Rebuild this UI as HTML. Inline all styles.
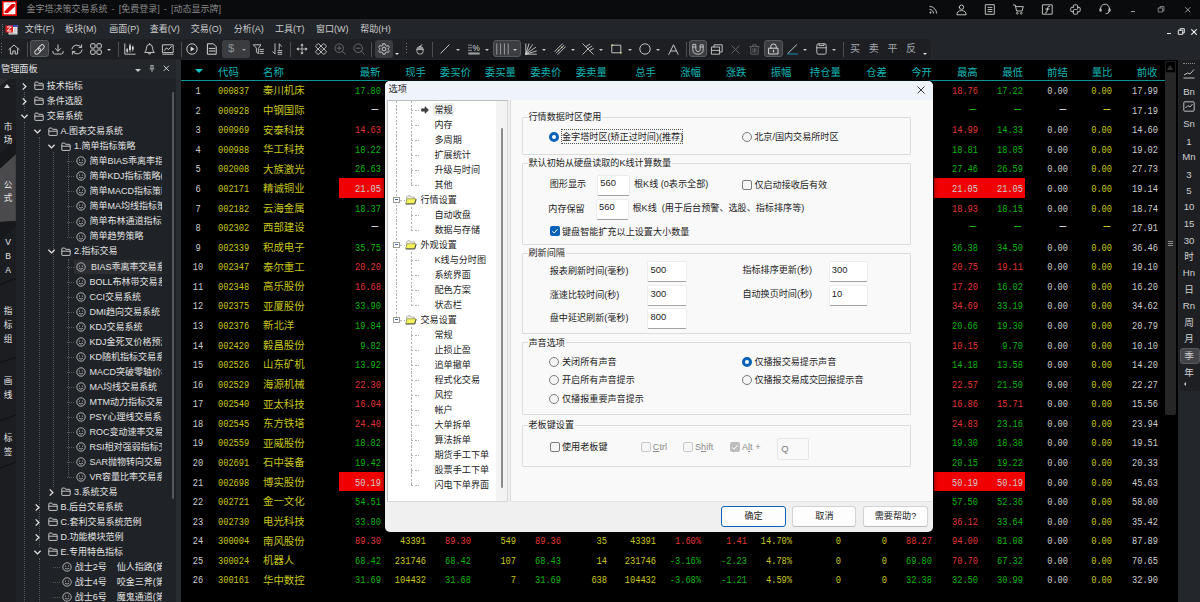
<!DOCTYPE html><html lang="zh"><head><meta charset="utf-8"><title>金字塔决策交易系统</title><style>
*{box-sizing:border-box;margin:0;padding:0}
html,body{width:1200px;height:602px;overflow:hidden;background:#000}
body{position:relative;font-family:"Liberation Sans","Noto Sans CJK SC",sans-serif;font-size:9px;color:#ddd}
.a{position:absolute}
.t{position:absolute;white-space:nowrap;line-height:1}
#title{left:0;top:0;width:1200px;height:19.3px;background:#0a0b0c}
#menu{left:0;top:19.3px;width:1200px;height:19.7px;background:#22252a}
#tb{left:0;top:39px;width:1200px;height:21px;background:#22252a}
.tbg{position:absolute;top:39.4px;height:19.4px;background:#1d1f23;border-radius:3px}
.mi{position:absolute;top:24.2px;font-size:9px;color:#cdcdcd;line-height:11px;white-space:nowrap}
.ic{position:absolute;overflow:visible}
.hl{position:absolute;background:#3b3d41;border:1px solid #55585c;border-radius:3px}
.sep{position:absolute;top:42px;width:1px;height:15px;background:#4a4d52}
.dd{position:absolute;width:0;height:0;border-left:2.2px solid transparent;border-right:2.2px solid transparent;border-top:2.6px solid #c8c8c8}
/* left panel */
#lp{left:0;top:60px;width:176px;height:542px;background:#1f2226;overflow:hidden}
#lph{left:0;top:0;width:176px;height:19px;background:#23262b}
#tabs{left:0;top:19px;width:16px;height:523px;background:#1b1d21}
.vt{position:absolute;left:3.5px;width:9px;font-size:8.6px;line-height:1;color:#e6e6e6;text-align:center}
.tr{position:absolute;font-size:9px;line-height:11px;color:#e4e4e4;white-space:nowrap}
#trclip{left:16px;top:19px;width:146px;height:523px;overflow:hidden}
/* table */
#tbl{left:181px;top:60px;width:985px;height:542px;background:#000;overflow:hidden}
.h{position:absolute;top:6.5px;font-size:10.4px;line-height:11px;color:#12b4b4;white-space:nowrap;text-align:right;font-family:"Liberation Sans","Noto Sans CJK SC",sans-serif}
.c{position:absolute;font-family:"Liberation Mono","Noto Sans CJK SC",monospace;font-size:11px;line-height:12px;white-space:nowrap;text-align:right;width:60px;transform:scaleX(.788);transform-origin:100% 50%}
.c.l{text-align:left;transform-origin:0 50%}
.n{position:absolute;font-size:10.4px;line-height:12px;white-space:nowrap;color:#c6c61c;font-family:"Liberation Sans","Noto Sans CJK SC",sans-serif}
.R{color:#e23434}.G{color:#0db40d}.Y{color:#c8c81e}.W{color:#cecece}
.red{position:absolute;background:#f00000}
/* dialog */
#dlg{left:385px;top:80.9px;width:548px;height:450.7px;background:#f0f0f0;border-radius:5px;overflow:hidden;color:#1a1a1a;box-shadow:0 0 0 1px rgba(0,0,0,.88),0 1px 4px 1px rgba(0,0,0,.55)}
#dlg .t{font-size:9.1px;line-height:11px;color:#1c1c1c}
.gb{position:absolute;border:1px solid #dcdcdc;border-radius:1px}
.gl{position:absolute;font-size:9.1px;line-height:11px;background:#f9f9f9;padding:0 1px;color:#1c1c1c;white-space:nowrap}
.inp{position:absolute;background:#fff;border:1px solid #ececec;border-bottom:1px solid #a2a2a2;border-radius:2px;font-size:9.4px;line-height:11px;color:#1c1c1c;padding:1.4px 0 0 2.2px}
.rad{position:absolute;width:10px;height:10px;border-radius:50%;border:1px solid #7c7c7c;background:#f4f4f4}
.rad.on{border:3px solid #0a62b8;background:#fff}
.chk{position:absolute;width:10px;height:10px;border-radius:2px;border:1px solid #7c7c7c;background:#f4f4f4}
.chk.on{border:none;background:#0a62b8}
.chk.dis{border:1px solid #c9c9c9;background:#f6f6f6}
.chk.dison{border:none;background:#bdbdbd}
.btn{position:absolute;top:424.9px;height:21.2px;background:#fdfdfd;border:1px solid #d2d2d2;border-bottom-color:#bcbcbc;border-radius:3px;font-size:9.1px;line-height:19px;text-align:center;color:#1c1c1c}
.ti{position:absolute;font-size:9.1px;line-height:11px;color:#1c1c1c;white-space:nowrap}
.dv{position:absolute;width:1px;background:repeating-linear-gradient(to bottom,#b2b2b2 0,#b2b2b2 2.2px,transparent 2.2px,transparent 3.7px)}
.dh{position:absolute;height:1px;background:repeating-linear-gradient(to right,#b2b2b2 0,#b2b2b2 2.2px,transparent 2.2px,transparent 3.7px)}
/* right toolbar */
#rt{left:1178px;top:60px;width:22px;height:542px;background:#23262a}
.rti{position:absolute;left:0;width:22px;text-align:center;font-size:9.6px;line-height:11px;color:#cfcfcf}
</style></head><body>
<div class="a" id="title">
<svg class="ic" style="left:1.5px;top:1px" width="15" height="15" viewBox="0 0 15 15"><rect x="0" y="0" width="15" height="15" fill="#e00000"/><rect x="1.6" y="1.3" width="11.8" height="12" fill="#fff"/><path d="M2.6 10.2L9.6 3H12.8V5.6L6 12H2.6Z" fill="#e00000"/><path d="M4 3.6H8.6M6.4 11.2H11" stroke="#f2b8b8" stroke-width="0.7"/></svg>
<div class="t" style="left:26.5px;top:4.8px;font-size:9px;word-spacing:1.6px;color:#888">金字塔决策交易系统 - [免费登录] - [动态显示牌]</div>
<svg class="ic" style="left:928.5px;top:4.8px" width="9" height="9" viewBox="0 0 9 9"><circle cx="1.5" cy="7.5" r="0.9" fill="#cfcfcf"/><path d="M0.8 4.4A3.8 3.8 0 0 1 4.6 8.2M0.8 1.4A6.8 6.8 0 0 1 7.6 8.2" stroke="#cfcfcf" stroke-width="0.9" fill="none" stroke-linecap="round" stroke-linejoin="round" /></svg>
<svg class="ic" style="left:956.0px;top:3.8px" width="11" height="11" viewBox="0 0 11 11"><path d="M3.3 3.2A2.2 2.2 0 1 1 7.7 3.2A2.2 2.2 0 1 1 3.3 3.2ZM0.9 10.4Q0.9 6.6 5.5 6.6Q10.1 6.6 10.1 10.4Z" stroke="#cfcfcf" stroke-width="0.9" fill="none" stroke-linecap="round" stroke-linejoin="round" /></svg>
<svg class="ic" style="left:985.0px;top:3.8px" width="10" height="11" viewBox="0 0 10 11"><path d="M0.7 0.7H9.3V10.3H0.7ZM3 3.4H7M3 5.5H7M3 7.6H7" stroke="#cfcfcf" stroke-width="0.9" fill="none" stroke-linecap="round" stroke-linejoin="round" /></svg>
<svg class="ic" style="left:1012.5px;top:3.8px" width="11" height="11" viewBox="0 0 11 11"><path d="M0.5 1H2.2L3.6 7H9L10.3 2.6H2.8" stroke="#cfcfcf" stroke-width="0.9" fill="none" stroke-linecap="round" stroke-linejoin="round" /><circle cx="4.3" cy="9.3" r="0.9" fill="none" stroke="#cfcfcf" stroke-width="0.8"/><circle cx="8.3" cy="9.3" r="0.9" fill="none" stroke="#cfcfcf" stroke-width="0.8"/></svg>
<svg class="ic" style="left:1041.7px;top:3.8px" width="11" height="11" viewBox="0 0 11 11"><path d="M0.8 0.8H10.2V10.2H0.8Z" stroke="#cfcfcf" stroke-width="0.9" fill="none" stroke-linecap="round" stroke-linejoin="round" /><path d="M3.5 9Q5 9 5.3 6L5.8 3.6Q6.1 2 7.6 2.2M3.8 5H7.2" stroke="#cfcfcf" stroke-width="1" fill="none" stroke-linecap="round" stroke-linejoin="round" /></svg>
<svg class="ic" style="left:1070.3px;top:3.8px" width="11" height="11" viewBox="0 0 11 11"><path d="M3.3 3.3V1.9Q3.3 0.8 4.4 0.8H6.6Q7.7 0.8 7.7 1.9V4.4Q7.7 5.5 6.6 5.5H4.4Q3.3 5.5 3.3 6.6V7.7M3.3 3.3H1.9Q0.8 3.3 0.8 4.4V6.6Q0.8 7.7 1.9 7.7H3.3M7.7 7.7V9.1Q7.7 10.2 6.6 10.2H4.4Q3.3 10.2 3.3 9.1V7.7M7.7 7.7H9.1Q10.2 7.7 10.2 6.6V4.4Q10.2 3.3 9.1 3.3H7.7" stroke="#cfcfcf" stroke-width="0.9" fill="none" stroke-linecap="round" stroke-linejoin="round" /></svg>
<svg class="ic" style="left:1099.0px;top:3.8px" width="12" height="11" viewBox="0 0 12 11"><path d="M1.6 6V4.6A4.4 4.4 0 0 1 10.4 4.6V6M1.6 4.8H0.9V7.2H1.9ZM10.4 4.8H11.1V7.2H10.1ZM10.4 7.2Q10.4 9.6 7 9.8" stroke="#cfcfcf" stroke-width="0.9" fill="none" stroke-linecap="round" stroke-linejoin="round" /></svg>
<div class="a" style="left:1130.5px;top:10.6px;width:4.6px;height:1.2px;background:#a0a0a0"></div>
<svg class="ic" style="left:1157.5px;top:6.3px" width="6.6" height="6.6" viewBox="0 0 6.6 6.6"><path d="M0.6 2H4.8V6H0.6ZM2 2V0.6H6V4.6H4.8" stroke="#9c9c9c" stroke-width="0.8" fill="none" stroke-linecap="round" stroke-linejoin="round" /></svg>
<svg class="ic" style="left:1184.8px;top:6.8px" width="5.6" height="5.6" viewBox="0 0 5.6 5.6"><path d="M0.5 0.5L5.1 5.1M5.1 0.5L0.5 5.1" stroke="#a8a8a8" stroke-width="0.9" fill="none" stroke-linecap="round" stroke-linejoin="round" /></svg>
</div><div class="a" id="menu"></div>
<div class="a" style="left:1.5px;top:24px;width:0;height:11px;border-left:1px dotted #6a6d72"></div>
<svg class="ic" style="left:5px;top:23.5px" width="13" height="11" viewBox="0 0 13 11"><rect x="3.5" y="1" width="9" height="9.5" fill="#e8e8e8"/><rect x="3.5" y="1" width="9" height="2" fill="#3a48b8"/><rect x="0.5" y="1.5" width="7.5" height="7" fill="#e01818"/><path d="M2 3H6.3L2.3 7H6.3" stroke="#fff" stroke-width="1" fill="none"/><path d="M9 5H11.5M9 7H11.5M5 9.3H11.5" stroke="#8a8a8a" stroke-width="0.6"/></svg>
<div class="mi" style="left:24.8px">文件(F)</div>
<div class="mi" style="left:65.0px">板块(M)</div>
<div class="mi" style="left:109.3px">画面(P)</div>
<div class="mi" style="left:149.7px">查看(V)</div>
<div class="mi" style="left:190.8px">交易(O)</div>
<div class="mi" style="left:233.8px">分析(A)</div>
<div class="mi" style="left:275.0px">工具(T)</div>
<div class="mi" style="left:316.0px">窗口(W)</div>
<div class="mi" style="left:360.3px">帮助(H)</div>
<div class="a" style="left:1167px;top:33px;width:4px;height:1.4px;background:#e8e8e8"></div>
<svg class="ic" style="left:1178.0px;top:28.0px" width="7" height="7" viewBox="0 0 7 7"><path d="M0.7 2.2H4.8V6.3H0.7ZM2.2 2.2V0.7H6.3V4.8H4.8" stroke="#e8e8e8" stroke-width="1" fill="none" stroke-linecap="round" stroke-linejoin="round" /></svg>
<svg class="ic" style="left:1190.5px;top:28.5px" width="6" height="6" viewBox="0 0 6 6"><path d="M0.6 0.6L5.4 5.4M5.4 0.6L0.6 5.4" stroke="#e8e8e8" stroke-width="1.2" fill="none" stroke-linecap="round" stroke-linejoin="round" /></svg><div class="a" id="tb"></div>
<div class="tbg" style="left:0;width:402.2px"></div>
<div class="tbg" style="left:402.7px;width:528.5px"></div>
<div class="a" style="left:0.9px;top:43px;width:1.3px;height:1.3px;background:#76797e;box-shadow:0 3px 0 #76797e,0 6px 0 #76797e,0 9px 0 #76797e"></div>
<svg class="ic" style="left:8.0px;top:43.5px" width="12" height="11" viewBox="0 0 12 11"><path d="M0.8 5.6L6 1L11.2 5.6M2.4 4.6V10H4.8V7H7.2V10H9.6V4.6" stroke="#d6d6d6" stroke-width="0.9" fill="none" stroke-linecap="round" stroke-linejoin="round" /></svg>
<div class="sep" style="left:26.8px"></div>
<div class="hl" style="left:30.0px;top:40.1px;width:18.8px;height:17.3px"></div>
<svg class="ic" style="left:33.0px;top:42.5px" width="13" height="13" viewBox="0 0 13 13"><g transform="rotate(-45 6.5 6.5)" fill="none" stroke="#d6d6d6" stroke-width="0.95"><rect x="0.6" y="4.5" width="7" height="4" rx="2"/><rect x="5.4" y="4.5" width="7" height="4" rx="2"/></g></svg>
<svg class="ic" style="left:52.0px;top:43.5px" width="12" height="11" viewBox="0 0 12 11"><path d="M6 0.8V7M3.4 4.6L6 7.2L8.6 4.6M0.8 7.4Q0.8 10 2.4 10H9.6Q11.2 10 11.2 7.4" stroke="#d6d6d6" stroke-width="0.9" fill="none" stroke-linecap="round" stroke-linejoin="round" /></svg>
<svg class="ic" style="left:71.0px;top:43.5px" width="12" height="11" viewBox="0 0 12 11"><path d="M0.9 5A5 4.2 0 0 1 10.2 3.2M10.6 0.8V3.4H8M11.1 6A5 4.2 0 0 1 1.8 7.8M1.4 10.2V7.6H4" stroke="#d6d6d6" stroke-width="0.9" fill="none" stroke-linecap="round" stroke-linejoin="round" /></svg>
<svg class="ic" style="left:90.3px;top:43.0px" width="12" height="12" viewBox="0 0 12 12"><g fill="none" stroke="#d6d6d6" stroke-width="0.95"><rect x="0.7" y="0.7" width="4.4" height="4.4" rx="1.1"/><rect x="6.9" y="0.7" width="4.4" height="4.4" rx="1.1"/><rect x="0.7" y="6.9" width="4.4" height="4.4" rx="1.1"/><rect x="6.9" y="6.9" width="4.4" height="4.4" rx="1.1"/></g></svg>
<div class="dd" style="left:107.1px;top:48.5px;border-top-color:#c8c8c8"></div>
<div class="sep" style="left:118.0px"></div>
<svg class="ic" style="left:124.0px;top:43.0px" width="12" height="12" viewBox="0 0 12 12"><path d="M0.8 0.8V11.2H11.2" stroke="#d6d6d6" stroke-width="0.9" fill="none" stroke-linecap="round" stroke-linejoin="round" /><path d="M3.2 5.5V9.5M6 1V9M8.8 3V8" stroke="#d6d6d6" stroke-width="0.8" fill="none" stroke-linecap="round" stroke-linejoin="round" /><rect x="2.4" y="6.2" width="1.7" height="2.4" fill="#d6d6d6"/><rect x="5.1" y="2.4" width="1.8" height="4.6" fill="#d6d6d6"/><rect x="7.9" y="3.8" width="1.8" height="2.6" fill="#d6d6d6"/></svg>
<svg class="ic" style="left:143.5px;top:43.0px" width="11" height="12" viewBox="0 0 11 12"><path d="M1 9.2Q2.4 8 2.4 5.2Q2.4 1.4 5.5 1.4Q8.6 1.4 8.6 5.2Q8.6 8 10 9.2ZM4.4 10.8H6.6M5.5 0.6V1.4" stroke="#d6d6d6" stroke-width="0.9" fill="none" stroke-linecap="round" stroke-linejoin="round" /></svg>
<svg class="ic" style="left:161.5px;top:43.5px" width="12" height="11" viewBox="0 0 12 11"><path d="M0.8 0.8H11.2V8.6H0.8ZM0.8 10.2H11.2" stroke="#d6d6d6" stroke-width="0.9" fill="none" stroke-linecap="round" stroke-linejoin="round" /><path d="M2.4 6.4L4.6 3.8L6.4 5.6L9.4 2.6" stroke="#d6d6d6" stroke-width="1" fill="none" stroke-linecap="round" stroke-linejoin="round" /></svg>
<div class="sep" style="left:180.5px"></div>
<svg class="ic" style="left:186.0px;top:43.0px" width="12" height="12" viewBox="0 0 12 12"><circle cx="6" cy="6" r="5.2" fill="none" stroke="#d6d6d6" stroke-width="0.9"/><path d="M4.6 3.4L8.6 6L4.6 8.6Z" fill="#d6d6d6"/></svg>
<svg class="ic" style="left:206.5px;top:43.0px" width="10" height="12" viewBox="0 0 10 12"><path d="M0.8 0.8H6.4L9.2 3.6V11.2H0.8ZM2.2 5.4H7.8M2.2 8H7.8" stroke="#d6d6d6" stroke-width="1" fill="none" stroke-linecap="round" stroke-linejoin="round" /></svg>
<div class="a" style="left:221.5px;top:40.1px;width:28px;height:17.6px;background:#3a3c40;border-radius:3px"></div>
<div class="t" style="left:228px;top:43.2px;font-size:11.5px;color:#8f9297">$</div>
<div class="dd" style="left:241.8px;top:48.5px;border-top-color:#9a9da2"></div>
<svg class="ic" style="left:252.5px;top:43.5px" width="11" height="11" viewBox="0 0 11 11"><path d="M0.6 0.8H8L5.4 4.4V9.6L3.4 8.2V4.4ZM7 5.4H10.4M7 7.4H10.4M7 9.4H10.4" stroke="#d6d6d6" stroke-width="0.85" fill="none" stroke-linecap="round" stroke-linejoin="round" /></svg>
<svg class="ic" style="left:272.0px;top:43.0px" width="11" height="12" viewBox="0 0 11 12"><path d="M0.8 8.8L3 11V0.8M7.2 6V0.8L9.6 3.2M6 7.6H9.8M6 9.4H9.8M6 11.2H9.8" stroke="#d6d6d6" stroke-width="0.85" fill="none" stroke-linecap="round" stroke-linejoin="round" /></svg>
<div class="sep" style="left:290.0px"></div>
<svg class="ic" style="left:296.0px;top:43.0px" width="12" height="12" viewBox="0 0 12 12"><path d="M6 2V10M2 6H10" stroke="#d6d6d6" stroke-width="0.75" fill="none" stroke-linecap="round" stroke-linejoin="round" /><path d="M6 0.4L7.7 2.6H4.3ZM6 11.6L7.7 9.4H4.3ZM0.4 6L2.6 4.3V7.7ZM11.6 6L9.4 4.3V7.7Z" fill="#d6d6d6"/></svg>
<svg class="ic" style="left:315.0px;top:43.0px" width="12" height="12" viewBox="0 0 12 12"><g fill="none" stroke="#d6d6d6" stroke-width="0.8"><rect x="0" y="3.9" width="12" height="4.2" rx="1.2" transform="rotate(45 6 6)"/><rect x="0" y="3.9" width="12" height="4.2" rx="1.2" transform="rotate(-45 6 6)"/></g><circle cx="6" cy="6" r="0.6" fill="#d6d6d6"/></svg>
<svg class="ic" style="left:333.8px;top:43.0px" width="12" height="12" viewBox="0 0 12 12"><circle cx="5.2" cy="5.2" r="4.3" fill="none" stroke="#6c6f74" stroke-width="0.9"/><path d="M8.4 8.4L11.2 11.2M3.2 5.2H7.2M5.2 3.2V7.2" stroke="#6c6f74" stroke-width="0.9" fill="none" stroke-linecap="round" stroke-linejoin="round" /></svg>
<svg class="ic" style="left:352.8px;top:43.0px" width="12" height="12" viewBox="0 0 12 12"><circle cx="5.2" cy="5.2" r="4.3" fill="none" stroke="#6c6f74" stroke-width="0.9"/><path d="M8.4 8.4L11.2 11.2M3.2 5.2H7.2" stroke="#6c6f74" stroke-width="0.9" fill="none" stroke-linecap="round" stroke-linejoin="round" /></svg>
<div class="sep" style="left:371.0px"></div>
<div class="a" style="left:374.5px;top:40.1px;width:18.5px;height:17.6px;background:#3a3c40;border-radius:3px"></div>
<svg class="ic" style="left:377.7px;top:43.0px" width="12" height="12" viewBox="0 0 12 12"><circle cx="6" cy="6" r="1.9" fill="none" stroke="#d6d6d6" stroke-width="0.9"/><path d="M5 0.8H7L7.4 2.3L8.8 3.1L10.3 2.6L11.3 4.3L10.2 5.4V6.6L11.3 7.7L10.3 9.4L8.8 8.9L7.4 9.7L7 11.2H5L4.6 9.7L3.2 8.9L1.7 9.4L0.7 7.7L1.8 6.6V5.4L0.7 4.3L1.7 2.6L3.2 3.1L4.6 2.3Z" stroke="#d6d6d6" stroke-width="0.85" fill="none" stroke-linecap="round" stroke-linejoin="round" /></svg>
<div class="dd" style="left:395.3px;top:52.5px;border-top-color:#e0e0e0"></div>
<div class="a" style="left:406.1px;top:43px;width:1.3px;height:1.3px;background:#76797e;box-shadow:0 3px 0 #76797e,0 6px 0 #76797e,0 9px 0 #76797e"></div>
<svg class="ic" style="left:415.7px;top:43.5px" width="8" height="11" viewBox="0 0 8 11"><path d="M0.9 5Q0.9 2.6 4 2.6Q7.1 2.6 7.1 5V7.6Q7.1 10.2 4 10.2Q0.9 10.2 0.9 7.6ZM0.9 5.6H7.1M4 2.6V5.6M4 2.6Q4 1 6 0.8" stroke="#d6d6d6" stroke-width="0.8" fill="none" stroke-linecap="round" stroke-linejoin="round" /><path d="M1.2 5.4Q1.2 3 4 3Q6.8 3 6.8 5.4Z" fill="#9a9a9a"/></svg>
<div class="sep" style="left:432.0px"></div>
<svg class="ic" style="left:440.0px;top:44.0px" width="10" height="10" viewBox="0 0 10 10"><path d="M0.8 9.2L9.2 0.8" stroke="#d6d6d6" stroke-width="0.9" fill="none" stroke-linecap="round" stroke-linejoin="round" /></svg>
<div class="dd" style="left:456.1px;top:48.5px;border-top-color:#c8c8c8"></div>
<svg class="ic" style="left:468.0px;top:43.5px" width="12" height="11" viewBox="0 0 12 11"><path d="M0.4 1.2H3.6M0.4 3.8H3.6M0.4 6.4H3.6" stroke="#d6d6d6" stroke-width="0.6" fill="none" stroke-linecap="round" stroke-linejoin="round" /><rect x="0.3" y="8.4" width="11.4" height="2.2" fill="#9c9c9c"/><text x="4.4" y="7.4" font-size="8.6" fill="#d6d6d6" font-family="Liberation Sans,sans-serif" textLength="7.4" lengthAdjust="spacingAndGlyphs">%</text></svg>
<div class="dd" style="left:484.8px;top:48.5px;border-top-color:#c8c8c8"></div>
<div class="hl" style="left:492.6px;top:40.1px;width:28.2px;height:17.3px"></div>
<svg class="ic" style="left:495.8px;top:43.0px" width="13" height="12" viewBox="0 0 13 12"><path d="M0.8 0.8V11.2M4.6 0.8V11.2M8.4 0.8V11.2M12.2 0.8V11.2" stroke="#a8a8a8" stroke-width="0.9" fill="none" stroke-linecap="round" stroke-linejoin="round" /></svg>
<div class="dd" style="left:513.3px;top:48.5px;border-top-color:#c8c8c8"></div>
<svg class="ic" style="left:525.0px;top:43.0px" width="12" height="12" viewBox="0 0 12 12"><path d="M0.8 11.2V0.8M0.8 11.2L4 0.8M0.8 11.2L7.6 1.6M0.8 11.2L10.6 4.4M0.8 11.2L11.4 8M0.8 11.2H11.4" stroke="#d6d6d6" stroke-width="0.85" fill="none" stroke-linecap="round" stroke-linejoin="round" /></svg>
<div class="dd" style="left:542.3px;top:48.5px;border-top-color:#c8c8c8"></div>
<svg class="ic" style="left:553.5px;top:43.0px" width="12" height="12" viewBox="0 0 12 12"><path d="M0.8 8.4L8.4 0.8M2.2 10L10 2.2M3.8 11.4L11.4 3.8" stroke="#d6d6d6" stroke-width="0.85" fill="none" stroke-linecap="round" stroke-linejoin="round" /><circle cx="4.6" cy="7.6" r="0.8" fill="#d8d890"/><circle cx="7.8" cy="4.4" r="0.8" fill="#d8d890"/></svg>
<div class="dd" style="left:570.8px;top:48.5px;border-top-color:#c8c8c8"></div>
<svg class="ic" style="left:581.5px;top:43.0px" width="12" height="12" viewBox="0 0 12 12"><path d="M0.8 0.8L11.2 11.2M0.8 11.2L6.4 5.6M4 3.4L7.8 1.2M6 5.4L9.8 3.2M8 7.4L11.4 5.4" stroke="#d6d6d6" stroke-width="0.85" fill="none" stroke-linecap="round" stroke-linejoin="round" /></svg>
<div class="dd" style="left:598.8px;top:48.5px;border-top-color:#c8c8c8"></div>
<svg class="ic" style="left:610.5px;top:44.0px" width="11" height="10" viewBox="0 0 11 10"><path d="M1.2 1.2H9.8V8.8H1.2Z" stroke="#d6d6d6" stroke-width="0.9" fill="none" stroke-linecap="round" stroke-linejoin="round" /><rect x="0.4" y="0.4" width="1.6" height="1.6" fill="#d8d890"/><rect x="9" y="8" width="1.6" height="1.6" fill="#d8d890"/></svg>
<div class="dd" style="left:627.5px;top:48.5px;border-top-color:#c8c8c8"></div>
<svg class="ic" style="left:639.3px;top:43.0px" width="12" height="12" viewBox="0 0 12 12"><circle cx="6" cy="6" r="5.2" fill="none" stroke="#d6d6d6" stroke-width="0.9"/></svg>
<div class="dd" style="left:656.1px;top:48.5px;border-top-color:#c8c8c8"></div>
<svg class="ic" style="left:667.5px;top:43.5px" width="11" height="11" viewBox="0 0 11 11"><path d="M0.8 10.4L5.5 0.8L10.2 10.4M2.6 7H8.4" stroke="#d6d6d6" stroke-width="0.9" fill="none" stroke-linecap="round" stroke-linejoin="round" /></svg>
<div class="sep" style="left:686.0px"></div>
<div class="hl" style="left:688.7px;top:40.1px;width:18.8px;height:17.3px"></div>
<svg class="ic" style="left:691.8px;top:43.5px" width="12" height="11" viewBox="0 0 12 11"><path d="M0.8 0.8V5.4Q0.8 10.2 6 10.2Q11.2 10.2 11.2 5.4V0.8H8.2V5.4Q8.2 7.6 6 7.6Q3.8 7.6 3.8 5.4V0.8ZM0.8 3H3.8M8.2 3H11.2" stroke="#d6d6d6" stroke-width="0.85" fill="none" stroke-linecap="round" stroke-linejoin="round" /></svg>
<svg class="ic" style="left:711.0px;top:43.5px" width="12" height="11" viewBox="0 0 12 11"><path d="M0.8 3H8.6V10.2H0.8ZM0.8 6.4H8.6M3 3V0.8H11.2V8H8.6" stroke="#d6d6d6" stroke-width="0.85" fill="none" stroke-linecap="round" stroke-linejoin="round" /></svg>
<svg class="ic" style="left:730.5px;top:44.5px" width="9" height="9" viewBox="0 0 9 9"><path d="M0.8 0.8L8.2 8.2M8.2 0.8L0.8 8.2" stroke="#6c6f74" stroke-width="0.85" fill="none" stroke-linecap="round" stroke-linejoin="round" /></svg>
<svg class="ic" style="left:748.5px;top:43.5px" width="11" height="11" viewBox="0 0 11 11"><path d="M0.8 2.6H10.2M3.8 2.6V0.8H7.2V2.6M1.8 2.6V10.2H9.2V2.6M4 4.6V8.2M5.5 4.6V8.2M7 4.6V8.2" stroke="#6c6f74" stroke-width="0.8" fill="none" stroke-linecap="round" stroke-linejoin="round" /></svg>
<div class="hl" style="left:764.0px;top:40.1px;width:19.0px;height:17.3px"></div>
<svg class="ic" style="left:768.0px;top:43.0px" width="11" height="12" viewBox="0 0 11 12"><path d="M1 5.2H10V11H1ZM2.8 5.2V3.4Q2.8 1 5.5 1Q8.2 1 8.2 3.4V5.2M5.5 7.2V9" stroke="#e4e4e4" stroke-width="0.9" fill="none" stroke-linecap="round" stroke-linejoin="round" /></svg>
<svg class="ic" style="left:787.0px;top:44.0px" width="11" height="11" viewBox="0 0 11 11"><path d="M1 9.2L9.6 0.8" stroke="#d6d6d6" stroke-width="0.9" fill="none" stroke-linecap="round" stroke-linejoin="round" /><path d="M0.6 10H10.4" stroke="#1492b2" stroke-width="1.2" fill="none" stroke-linecap="round" stroke-linejoin="round" /></svg>
<div class="dd" style="left:803.3px;top:48.5px;border-top-color:#c8c8c8"></div>
<svg class="ic" style="left:815.5px;top:43.0px" width="11" height="12" viewBox="0 0 11 12"><path d="M0.8 2.4Q0.8 0.8 2.4 0.8H8.6Q10.2 0.8 10.2 2.4V9.6Q10.2 11.2 8.6 11.2H2.4Q0.8 11.2 0.8 9.6ZM0.8 4.8H10.2M3 0.8V2.6H8V0.8" stroke="#d6d6d6" stroke-width="0.85" fill="none" stroke-linecap="round" stroke-linejoin="round" /></svg>
<div class="dd" style="left:831.8px;top:48.5px;border-top-color:#c8c8c8"></div>
<div class="sep" style="left:843.3px"></div>
<div class="t" style="left:850.0px;top:44px;font-size:10px;color:#a4a7ac">买</div>
<div class="t" style="left:868.7px;top:44px;font-size:10px;color:#a4a7ac">卖</div>
<div class="t" style="left:887.5px;top:44px;font-size:10px;color:#a4a7ac">平</div>
<div class="t" style="left:906.0px;top:44px;font-size:10px;color:#a4a7ac">反</div>
<div class="dd" style="left:923.1px;top:52.5px;border-top-color:#e0e0e0"></div><div class="a" id="lp">
<div class="a" id="lph"></div>
<div class="t" style="left:1px;top:4.5px;font-size:9.2px;color:#e2e2e2">管理面板</div>
<div class="a" style="left:135px;top:8.5px;width:0;height:0;border-left:3.2px solid transparent;border-right:3.2px solid transparent;border-top:3.6px solid #c8c8c8"></div>
<svg class="ic" style="left:149.3px;top:5px" width="6" height="7.8" viewBox="0 0 7 9"><path d="M1.8 0.6H5.2M2.3 0.6V4.3M4.7 0.6V4.3M0.8 4.5H6.2M3.5 4.5V8.2" stroke="#d0d0d0" stroke-width="0.9" fill="none"/></svg>
<svg class="ic" style="left:163px;top:5.3px" width="6.6" height="6.6" viewBox="0 0 7 7"><path d="M0.7 0.7L6.3 6.3M6.3 0.7L0.7 6.3" stroke="#d8d8d8" stroke-width="1" fill="none"/></svg>
<div class="a" id="tabs"></div>
<svg class="ic" style="left:0;top:0" width="16" height="542" viewBox="0 0 16 542"><path d="M0 108.6L15.8 94V161L0 162Z" fill="#4a4a4c"/><path d="M0 162L15.8 161V166L0 181Z" fill="#17181b"/><path d="M0 94L15.8 79.5V94L0 108.6Z" fill="#17181b"/><path d="M0 19V26L8 19Z" fill="#2c2e32"/><path d="M0 224.8L16 218.3M0 302.5L16 297.4M0 360.9L16 355M0 408L16 402" stroke="#111215" stroke-width="1.3" fill="none"/></svg>
<div class="a" style="left:4px;top:23.5px;width:0;height:0;border-left:3.5px solid transparent;border-right:3.5px solid transparent;border-bottom:4.2px solid #d8d8d8"></div>
<div class="vt" style="top:63.2px">市</div>
<div class="vt" style="top:75.7px">场</div>
<div class="vt" style="top:121.2px">公</div>
<div class="vt" style="top:134.2px">式</div>
<div class="vt" style="top:178.2px">V</div>
<div class="vt" style="top:192.2px">B</div>
<div class="vt" style="top:205.7px">A</div>
<div class="vt" style="top:246.7px">指</div>
<div class="vt" style="top:260.7px">标</div>
<div class="vt" style="top:274.7px">组</div>
<div class="vt" style="top:316.7px">画</div>
<div class="vt" style="top:330.7px">线</div>
<div class="vt" style="top:373.7px">标</div>
<div class="vt" style="top:387.7px">签</div>
<div class="a" id="trclip">
<div class="a" style="left:8.0px;top:13.2px;width:0;height:19.1px;border-left:1px dotted #565a60"></div>
<div class="a" style="left:8.0px;top:43.3px;width:0;height:479.7px;border-left:1px dotted #565a60"></div>
<div class="a" style="left:22.5px;top:58.3px;width:0;height:409.8px;border-left:1px dotted #565a60"></div>
<div class="a" style="left:22.5px;top:479.1px;width:0;height:43.9px;border-left:1px dotted #565a60"></div>
<div class="a" style="left:37.0px;top:73.3px;width:0;height:334.7px;border-left:1px dotted #565a60"></div>
<div class="a" style="left:51.5px;top:74.3px;width:0;height:83.2px;border-left:1px dotted #565a60"></div>
<div class="a" style="left:51.5px;top:179.5px;width:0;height:218.4px;border-left:1px dotted #565a60"></div>
<svg class="ic" style="left:5.7px;top:3.7px" width="5" height="7" viewBox="0 0 5 7"><path d="M0.7 0.4L3.9 3.5L0.7 6.6" fill="none" stroke="#e6e6e6" stroke-width="1.25"/></svg>
<svg class="ic" style="left:18.0px;top:2.4px" width="10" height="9" viewBox="0 0 10 9"><path d="M0.8 7.9V2.2Q0.8 1 2 1H3.6L4.6 2.3H8.2Q9.2 2.3 9.2 3.3V7.9Q9.2 8.4 8.6 8.4H1.4Q0.8 8.4 0.8 7.9Z M0.8 4.2H9.2" fill="none" stroke="#d8d8d8" stroke-width="0.9"/></svg>
<div class="tr" style="left:30.7px;top:2.1px">技术指标</div>
<svg class="ic" style="left:5.7px;top:18.7px" width="5" height="7" viewBox="0 0 5 7"><path d="M0.7 0.4L3.9 3.5L0.7 6.6" fill="none" stroke="#e6e6e6" stroke-width="1.25"/></svg>
<svg class="ic" style="left:18.0px;top:17.4px" width="10" height="9" viewBox="0 0 10 9"><path d="M0.8 7.9V2.2Q0.8 1 2 1H3.6L4.6 2.3H8.2Q9.2 2.3 9.2 3.3V7.9Q9.2 8.4 8.6 8.4H1.4Q0.8 8.4 0.8 7.9Z M0.8 4.2H9.2" fill="none" stroke="#d8d8d8" stroke-width="0.9"/></svg>
<div class="tr" style="left:30.7px;top:17.1px">条件选股</div>
<svg class="ic" style="left:4.5px;top:34.8px" width="7" height="5" viewBox="0 0 7 5"><path d="M0.4 0.7L3.5 3.9L6.6 0.7" fill="none" stroke="#e6e6e6" stroke-width="1.25"/></svg>
<svg class="ic" style="left:18.0px;top:32.5px" width="10" height="9" viewBox="0 0 10 9"><path d="M0.8 7.9V2.2Q0.8 1 2 1H3.6L4.6 2.3H8.2Q9.2 2.3 9.2 3.3V7.9Q9.2 8.4 8.6 8.4H1.4Q0.8 8.4 0.8 7.9Z M0.8 4.2H9.2" fill="none" stroke="#d8d8d8" stroke-width="0.9"/></svg>
<div class="tr" style="left:30.7px;top:32.2px">交易系统</div>
<svg class="ic" style="left:18.2px;top:49.8px" width="7" height="5" viewBox="0 0 7 5"><path d="M0.4 0.7L3.5 3.9L6.6 0.7" fill="none" stroke="#e6e6e6" stroke-width="1.25"/></svg>
<svg class="ic" style="left:31.7px;top:47.5px" width="10" height="9" viewBox="0 0 10 9"><path d="M0.8 7.9V2.2Q0.8 1 2 1H3.6L4.6 2.3H8.2Q9.2 2.3 9.2 3.3V7.9Q9.2 8.4 8.6 8.4H1.4Q0.8 8.4 0.8 7.9Z M0.8 4.2H9.2" fill="none" stroke="#d8d8d8" stroke-width="0.9"/></svg>
<div class="tr" style="left:44.4px;top:47.2px">A.图表交易系统</div>
<svg class="ic" style="left:31.9px;top:64.8px" width="7" height="5" viewBox="0 0 7 5"><path d="M0.4 0.7L3.5 3.9L6.6 0.7" fill="none" stroke="#e6e6e6" stroke-width="1.25"/></svg>
<svg class="ic" style="left:45.4px;top:62.5px" width="10" height="9" viewBox="0 0 10 9"><path d="M0.8 7.9V2.2Q0.8 1 2 1H3.6L4.6 2.3H8.2Q9.2 2.3 9.2 3.3V7.9Q9.2 8.4 8.6 8.4H1.4Q0.8 8.4 0.8 7.9Z M0.8 4.2H9.2" fill="none" stroke="#d8d8d8" stroke-width="0.9"/></svg>
<div class="tr" style="left:58.1px;top:62.2px">1.简单指标策略</div>
<div class="a" style="left:51.3px;top:82.3px;width:7px;height:0;border-top:1px dotted #565a60"></div>
<svg class="ic" style="left:60.3px;top:77.3px" width="10" height="10" viewBox="0 0 10 10"><circle cx="5" cy="5" r="4.2" fill="none" stroke="#d0d0d0" stroke-width="0.8"/><circle cx="3.5" cy="4" r="0.6" fill="#d0d0d0"/><circle cx="6.5" cy="4" r="0.6" fill="#d0d0d0"/><path d="M3 6.2Q5 8 7 6.2" fill="none" stroke="#d0d0d0" stroke-width="0.7"/></svg>
<div class="tr" style="left:73.5px;top:77.2px">简单BIAS乖离率指标策略</div>
<div class="a" style="left:51.3px;top:97.4px;width:7px;height:0;border-top:1px dotted #565a60"></div>
<svg class="ic" style="left:60.3px;top:92.4px" width="10" height="10" viewBox="0 0 10 10"><circle cx="5" cy="5" r="4.2" fill="none" stroke="#d0d0d0" stroke-width="0.8"/><circle cx="3.5" cy="4" r="0.6" fill="#d0d0d0"/><circle cx="6.5" cy="4" r="0.6" fill="#d0d0d0"/><path d="M3 6.2Q5 8 7 6.2" fill="none" stroke="#d0d0d0" stroke-width="0.7"/></svg>
<div class="tr" style="left:73.5px;top:92.3px">简单KDJ指标策略(示例)</div>
<div class="a" style="left:51.3px;top:112.4px;width:7px;height:0;border-top:1px dotted #565a60"></div>
<svg class="ic" style="left:60.3px;top:107.4px" width="10" height="10" viewBox="0 0 10 10"><circle cx="5" cy="5" r="4.2" fill="none" stroke="#d0d0d0" stroke-width="0.8"/><circle cx="3.5" cy="4" r="0.6" fill="#d0d0d0"/><circle cx="6.5" cy="4" r="0.6" fill="#d0d0d0"/><path d="M3 6.2Q5 8 7 6.2" fill="none" stroke="#d0d0d0" stroke-width="0.7"/></svg>
<div class="tr" style="left:73.5px;top:107.3px">简单MACD指标策略</div>
<div class="a" style="left:51.3px;top:127.4px;width:7px;height:0;border-top:1px dotted #565a60"></div>
<svg class="ic" style="left:60.3px;top:122.4px" width="10" height="10" viewBox="0 0 10 10"><circle cx="5" cy="5" r="4.2" fill="none" stroke="#d0d0d0" stroke-width="0.8"/><circle cx="3.5" cy="4" r="0.6" fill="#d0d0d0"/><circle cx="6.5" cy="4" r="0.6" fill="#d0d0d0"/><path d="M3 6.2Q5 8 7 6.2" fill="none" stroke="#d0d0d0" stroke-width="0.7"/></svg>
<div class="tr" style="left:73.5px;top:122.3px">简单MA均线指标策略</div>
<div class="a" style="left:51.3px;top:142.5px;width:7px;height:0;border-top:1px dotted #565a60"></div>
<svg class="ic" style="left:60.3px;top:137.5px" width="10" height="10" viewBox="0 0 10 10"><circle cx="5" cy="5" r="4.2" fill="none" stroke="#d0d0d0" stroke-width="0.8"/><circle cx="3.5" cy="4" r="0.6" fill="#d0d0d0"/><circle cx="6.5" cy="4" r="0.6" fill="#d0d0d0"/><path d="M3 6.2Q5 8 7 6.2" fill="none" stroke="#d0d0d0" stroke-width="0.7"/></svg>
<div class="tr" style="left:73.5px;top:137.4px">简单布林通道指标策略</div>
<div class="a" style="left:51.3px;top:157.5px;width:7px;height:0;border-top:1px dotted #565a60"></div>
<svg class="ic" style="left:60.3px;top:152.5px" width="10" height="10" viewBox="0 0 10 10"><circle cx="5" cy="5" r="4.2" fill="none" stroke="#d0d0d0" stroke-width="0.8"/><circle cx="3.5" cy="4" r="0.6" fill="#d0d0d0"/><circle cx="6.5" cy="4" r="0.6" fill="#d0d0d0"/><path d="M3 6.2Q5 8 7 6.2" fill="none" stroke="#d0d0d0" stroke-width="0.7"/></svg>
<div class="tr" style="left:73.5px;top:152.4px">简单趋势策略</div>
<svg class="ic" style="left:31.9px;top:170.0px" width="7" height="5" viewBox="0 0 7 5"><path d="M0.4 0.7L3.5 3.9L6.6 0.7" fill="none" stroke="#e6e6e6" stroke-width="1.25"/></svg>
<svg class="ic" style="left:45.4px;top:167.7px" width="10" height="9" viewBox="0 0 10 9"><path d="M0.8 7.9V2.2Q0.8 1 2 1H3.6L4.6 2.3H8.2Q9.2 2.3 9.2 3.3V7.9Q9.2 8.4 8.6 8.4H1.4Q0.8 8.4 0.8 7.9Z M0.8 4.2H9.2" fill="none" stroke="#d8d8d8" stroke-width="0.9"/></svg>
<div class="tr" style="left:58.1px;top:167.4px">2.指标交易</div>
<div class="a" style="left:51.3px;top:187.6px;width:7px;height:0;border-top:1px dotted #565a60"></div>
<div class="a" style="left:57.8px;top:180.6px;width:100px;height:14.4px;background:#2c2e32"></div>
<svg class="ic" style="left:60.3px;top:182.6px" width="10" height="10" viewBox="0 0 10 10"><circle cx="5" cy="5" r="4.2" fill="none" stroke="#d0d0d0" stroke-width="0.8"/><circle cx="3.5" cy="4" r="0.6" fill="#d0d0d0"/><circle cx="6.5" cy="4" r="0.6" fill="#d0d0d0"/><path d="M3 6.2Q5 8 7 6.2" fill="none" stroke="#d0d0d0" stroke-width="0.7"/></svg>
<div class="tr" style="left:75.0px;top:182.5px"> BIAS乖离率交易系统</div>
<div class="a" style="left:51.3px;top:202.6px;width:7px;height:0;border-top:1px dotted #565a60"></div>
<svg class="ic" style="left:60.3px;top:197.6px" width="10" height="10" viewBox="0 0 10 10"><circle cx="5" cy="5" r="4.2" fill="none" stroke="#d0d0d0" stroke-width="0.8"/><circle cx="3.5" cy="4" r="0.6" fill="#d0d0d0"/><circle cx="6.5" cy="4" r="0.6" fill="#d0d0d0"/><path d="M3 6.2Q5 8 7 6.2" fill="none" stroke="#d0d0d0" stroke-width="0.7"/></svg>
<div class="tr" style="left:73.5px;top:197.5px">BOLL布林带交易系统</div>
<div class="a" style="left:51.3px;top:217.6px;width:7px;height:0;border-top:1px dotted #565a60"></div>
<svg class="ic" style="left:60.3px;top:212.6px" width="10" height="10" viewBox="0 0 10 10"><circle cx="5" cy="5" r="4.2" fill="none" stroke="#d0d0d0" stroke-width="0.8"/><circle cx="3.5" cy="4" r="0.6" fill="#d0d0d0"/><circle cx="6.5" cy="4" r="0.6" fill="#d0d0d0"/><path d="M3 6.2Q5 8 7 6.2" fill="none" stroke="#d0d0d0" stroke-width="0.7"/></svg>
<div class="tr" style="left:73.5px;top:212.5px">CCI交易系统</div>
<div class="a" style="left:51.3px;top:232.6px;width:7px;height:0;border-top:1px dotted #565a60"></div>
<svg class="ic" style="left:60.3px;top:227.6px" width="10" height="10" viewBox="0 0 10 10"><circle cx="5" cy="5" r="4.2" fill="none" stroke="#d0d0d0" stroke-width="0.8"/><circle cx="3.5" cy="4" r="0.6" fill="#d0d0d0"/><circle cx="6.5" cy="4" r="0.6" fill="#d0d0d0"/><path d="M3 6.2Q5 8 7 6.2" fill="none" stroke="#d0d0d0" stroke-width="0.7"/></svg>
<div class="tr" style="left:73.5px;top:227.5px">DMI趋向交易系统</div>
<div class="a" style="left:51.3px;top:247.7px;width:7px;height:0;border-top:1px dotted #565a60"></div>
<svg class="ic" style="left:60.3px;top:242.7px" width="10" height="10" viewBox="0 0 10 10"><circle cx="5" cy="5" r="4.2" fill="none" stroke="#d0d0d0" stroke-width="0.8"/><circle cx="3.5" cy="4" r="0.6" fill="#d0d0d0"/><circle cx="6.5" cy="4" r="0.6" fill="#d0d0d0"/><path d="M3 6.2Q5 8 7 6.2" fill="none" stroke="#d0d0d0" stroke-width="0.7"/></svg>
<div class="tr" style="left:73.5px;top:242.6px">KDJ交易系统</div>
<div class="a" style="left:51.3px;top:262.7px;width:7px;height:0;border-top:1px dotted #565a60"></div>
<svg class="ic" style="left:60.3px;top:257.7px" width="10" height="10" viewBox="0 0 10 10"><circle cx="5" cy="5" r="4.2" fill="none" stroke="#d0d0d0" stroke-width="0.8"/><circle cx="3.5" cy="4" r="0.6" fill="#d0d0d0"/><circle cx="6.5" cy="4" r="0.6" fill="#d0d0d0"/><path d="M3 6.2Q5 8 7 6.2" fill="none" stroke="#d0d0d0" stroke-width="0.7"/></svg>
<div class="tr" style="left:73.5px;top:257.6px">KDJ金死叉价格预测</div>
<div class="a" style="left:51.3px;top:277.7px;width:7px;height:0;border-top:1px dotted #565a60"></div>
<svg class="ic" style="left:60.3px;top:272.7px" width="10" height="10" viewBox="0 0 10 10"><circle cx="5" cy="5" r="4.2" fill="none" stroke="#d0d0d0" stroke-width="0.8"/><circle cx="3.5" cy="4" r="0.6" fill="#d0d0d0"/><circle cx="6.5" cy="4" r="0.6" fill="#d0d0d0"/><path d="M3 6.2Q5 8 7 6.2" fill="none" stroke="#d0d0d0" stroke-width="0.7"/></svg>
<div class="tr" style="left:73.5px;top:272.6px">KD随机指标交易系统</div>
<div class="a" style="left:51.3px;top:292.8px;width:7px;height:0;border-top:1px dotted #565a60"></div>
<svg class="ic" style="left:60.3px;top:287.8px" width="10" height="10" viewBox="0 0 10 10"><circle cx="5" cy="5" r="4.2" fill="none" stroke="#d0d0d0" stroke-width="0.8"/><circle cx="3.5" cy="4" r="0.6" fill="#d0d0d0"/><circle cx="6.5" cy="4" r="0.6" fill="#d0d0d0"/><path d="M3 6.2Q5 8 7 6.2" fill="none" stroke="#d0d0d0" stroke-width="0.7"/></svg>
<div class="tr" style="left:73.5px;top:287.7px">MACD突破零轴价格</div>
<div class="a" style="left:51.3px;top:307.8px;width:7px;height:0;border-top:1px dotted #565a60"></div>
<svg class="ic" style="left:60.3px;top:302.8px" width="10" height="10" viewBox="0 0 10 10"><circle cx="5" cy="5" r="4.2" fill="none" stroke="#d0d0d0" stroke-width="0.8"/><circle cx="3.5" cy="4" r="0.6" fill="#d0d0d0"/><circle cx="6.5" cy="4" r="0.6" fill="#d0d0d0"/><path d="M3 6.2Q5 8 7 6.2" fill="none" stroke="#d0d0d0" stroke-width="0.7"/></svg>
<div class="tr" style="left:73.5px;top:302.7px">MA均线交易系统</div>
<div class="a" style="left:51.3px;top:322.8px;width:7px;height:0;border-top:1px dotted #565a60"></div>
<svg class="ic" style="left:60.3px;top:317.8px" width="10" height="10" viewBox="0 0 10 10"><circle cx="5" cy="5" r="4.2" fill="none" stroke="#d0d0d0" stroke-width="0.8"/><circle cx="3.5" cy="4" r="0.6" fill="#d0d0d0"/><circle cx="6.5" cy="4" r="0.6" fill="#d0d0d0"/><path d="M3 6.2Q5 8 7 6.2" fill="none" stroke="#d0d0d0" stroke-width="0.7"/></svg>
<div class="tr" style="left:73.5px;top:317.7px">MTM动力指标交易系统</div>
<div class="a" style="left:51.3px;top:337.9px;width:7px;height:0;border-top:1px dotted #565a60"></div>
<svg class="ic" style="left:60.3px;top:332.9px" width="10" height="10" viewBox="0 0 10 10"><circle cx="5" cy="5" r="4.2" fill="none" stroke="#d0d0d0" stroke-width="0.8"/><circle cx="3.5" cy="4" r="0.6" fill="#d0d0d0"/><circle cx="6.5" cy="4" r="0.6" fill="#d0d0d0"/><path d="M3 6.2Q5 8 7 6.2" fill="none" stroke="#d0d0d0" stroke-width="0.7"/></svg>
<div class="tr" style="left:73.5px;top:332.8px">PSY心理线交易系统</div>
<div class="a" style="left:51.3px;top:352.9px;width:7px;height:0;border-top:1px dotted #565a60"></div>
<svg class="ic" style="left:60.3px;top:347.9px" width="10" height="10" viewBox="0 0 10 10"><circle cx="5" cy="5" r="4.2" fill="none" stroke="#d0d0d0" stroke-width="0.8"/><circle cx="3.5" cy="4" r="0.6" fill="#d0d0d0"/><circle cx="6.5" cy="4" r="0.6" fill="#d0d0d0"/><path d="M3 6.2Q5 8 7 6.2" fill="none" stroke="#d0d0d0" stroke-width="0.7"/></svg>
<div class="tr" style="left:73.5px;top:347.8px">ROC变动速率交易系统</div>
<div class="a" style="left:51.3px;top:367.9px;width:7px;height:0;border-top:1px dotted #565a60"></div>
<svg class="ic" style="left:60.3px;top:362.9px" width="10" height="10" viewBox="0 0 10 10"><circle cx="5" cy="5" r="4.2" fill="none" stroke="#d0d0d0" stroke-width="0.8"/><circle cx="3.5" cy="4" r="0.6" fill="#d0d0d0"/><circle cx="6.5" cy="4" r="0.6" fill="#d0d0d0"/><path d="M3 6.2Q5 8 7 6.2" fill="none" stroke="#d0d0d0" stroke-width="0.7"/></svg>
<div class="tr" style="left:73.5px;top:362.8px">RSI相对强弱指标交易</div>
<div class="a" style="left:51.3px;top:382.9px;width:7px;height:0;border-top:1px dotted #565a60"></div>
<svg class="ic" style="left:60.3px;top:377.9px" width="10" height="10" viewBox="0 0 10 10"><circle cx="5" cy="5" r="4.2" fill="none" stroke="#d0d0d0" stroke-width="0.8"/><circle cx="3.5" cy="4" r="0.6" fill="#d0d0d0"/><circle cx="6.5" cy="4" r="0.6" fill="#d0d0d0"/><path d="M3 6.2Q5 8 7 6.2" fill="none" stroke="#d0d0d0" stroke-width="0.7"/></svg>
<div class="tr" style="left:73.5px;top:377.8px">SAR抛物转向交易系统</div>
<div class="a" style="left:51.3px;top:398.0px;width:7px;height:0;border-top:1px dotted #565a60"></div>
<svg class="ic" style="left:60.3px;top:393.0px" width="10" height="10" viewBox="0 0 10 10"><circle cx="5" cy="5" r="4.2" fill="none" stroke="#d0d0d0" stroke-width="0.8"/><circle cx="3.5" cy="4" r="0.6" fill="#d0d0d0"/><circle cx="6.5" cy="4" r="0.6" fill="#d0d0d0"/><path d="M3 6.2Q5 8 7 6.2" fill="none" stroke="#d0d0d0" stroke-width="0.7"/></svg>
<div class="tr" style="left:73.5px;top:392.9px">VR容量比率交易系统</div>
<svg class="ic" style="left:33.1px;top:409.5px" width="5" height="7" viewBox="0 0 5 7"><path d="M0.7 0.4L3.9 3.5L0.7 6.6" fill="none" stroke="#e6e6e6" stroke-width="1.25"/></svg>
<svg class="ic" style="left:45.4px;top:408.2px" width="10" height="9" viewBox="0 0 10 9"><path d="M0.8 7.9V2.2Q0.8 1 2 1H3.6L4.6 2.3H8.2Q9.2 2.3 9.2 3.3V7.9Q9.2 8.4 8.6 8.4H1.4Q0.8 8.4 0.8 7.9Z M0.8 4.2H9.2" fill="none" stroke="#d8d8d8" stroke-width="0.9"/></svg>
<div class="tr" style="left:58.1px;top:407.9px">3.系统交易</div>
<svg class="ic" style="left:19.4px;top:424.5px" width="5" height="7" viewBox="0 0 5 7"><path d="M0.7 0.4L3.9 3.5L0.7 6.6" fill="none" stroke="#e6e6e6" stroke-width="1.25"/></svg>
<svg class="ic" style="left:31.7px;top:423.2px" width="10" height="9" viewBox="0 0 10 9"><path d="M0.8 7.9V2.2Q0.8 1 2 1H3.6L4.6 2.3H8.2Q9.2 2.3 9.2 3.3V7.9Q9.2 8.4 8.6 8.4H1.4Q0.8 8.4 0.8 7.9Z M0.8 4.2H9.2" fill="none" stroke="#d8d8d8" stroke-width="0.9"/></svg>
<div class="tr" style="left:44.4px;top:422.9px">B.后台交易系统</div>
<svg class="ic" style="left:19.4px;top:439.6px" width="5" height="7" viewBox="0 0 5 7"><path d="M0.7 0.4L3.9 3.5L0.7 6.6" fill="none" stroke="#e6e6e6" stroke-width="1.25"/></svg>
<svg class="ic" style="left:31.7px;top:438.3px" width="10" height="9" viewBox="0 0 10 9"><path d="M0.8 7.9V2.2Q0.8 1 2 1H3.6L4.6 2.3H8.2Q9.2 2.3 9.2 3.3V7.9Q9.2 8.4 8.6 8.4H1.4Q0.8 8.4 0.8 7.9Z M0.8 4.2H9.2" fill="none" stroke="#d8d8d8" stroke-width="0.9"/></svg>
<div class="tr" style="left:44.4px;top:438.0px">C.套利交易系统范例</div>
<svg class="ic" style="left:19.4px;top:454.6px" width="5" height="7" viewBox="0 0 5 7"><path d="M0.7 0.4L3.9 3.5L0.7 6.6" fill="none" stroke="#e6e6e6" stroke-width="1.25"/></svg>
<svg class="ic" style="left:31.7px;top:453.3px" width="10" height="9" viewBox="0 0 10 9"><path d="M0.8 7.9V2.2Q0.8 1 2 1H3.6L4.6 2.3H8.2Q9.2 2.3 9.2 3.3V7.9Q9.2 8.4 8.6 8.4H1.4Q0.8 8.4 0.8 7.9Z M0.8 4.2H9.2" fill="none" stroke="#d8d8d8" stroke-width="0.9"/></svg>
<div class="tr" style="left:44.4px;top:453.0px">D.功能模块范例</div>
<svg class="ic" style="left:18.2px;top:470.6px" width="7" height="5" viewBox="0 0 7 5"><path d="M0.4 0.7L3.5 3.9L6.6 0.7" fill="none" stroke="#e6e6e6" stroke-width="1.25"/></svg>
<svg class="ic" style="left:31.7px;top:468.3px" width="10" height="9" viewBox="0 0 10 9"><path d="M0.8 7.9V2.2Q0.8 1 2 1H3.6L4.6 2.3H8.2Q9.2 2.3 9.2 3.3V7.9Q9.2 8.4 8.6 8.4H1.4Q0.8 8.4 0.8 7.9Z M0.8 4.2H9.2" fill="none" stroke="#d8d8d8" stroke-width="0.9"/></svg>
<div class="tr" style="left:44.4px;top:468.0px">E.专用特色指标</div>
<div class="a" style="left:36.5px;top:488.2px;width:7px;height:0;border-top:1px dotted #565a60"></div>
<svg class="ic" style="left:45.5px;top:483.2px" width="10" height="10" viewBox="0 0 10 10"><circle cx="5" cy="5" r="4.2" fill="none" stroke="#d0d0d0" stroke-width="0.8"/><circle cx="3.5" cy="4" r="0.6" fill="#d0d0d0"/><circle cx="6.5" cy="4" r="0.6" fill="#d0d0d0"/><path d="M3 6.2Q5 8 7 6.2" fill="none" stroke="#d0d0d0" stroke-width="0.7"/></svg>
<div class="tr" style="left:58.7px;top:483.1px">战士2号&nbsp;&nbsp;&nbsp; 仙人指路(第二版)</div>
<div class="a" style="left:36.5px;top:503.2px;width:7px;height:0;border-top:1px dotted #565a60"></div>
<svg class="ic" style="left:45.5px;top:498.2px" width="10" height="10" viewBox="0 0 10 10"><circle cx="5" cy="5" r="4.2" fill="none" stroke="#d0d0d0" stroke-width="0.8"/><circle cx="3.5" cy="4" r="0.6" fill="#d0d0d0"/><circle cx="6.5" cy="4" r="0.6" fill="#d0d0d0"/><path d="M3 6.2Q5 8 7 6.2" fill="none" stroke="#d0d0d0" stroke-width="0.7"/></svg>
<div class="tr" style="left:58.7px;top:498.1px">战士4号&nbsp;&nbsp;&nbsp; 咬金三斧(第二版)</div>
<div class="a" style="left:36.5px;top:518.2px;width:7px;height:0;border-top:1px dotted #565a60"></div>
<svg class="ic" style="left:45.5px;top:513.2px" width="10" height="10" viewBox="0 0 10 10"><circle cx="5" cy="5" r="4.2" fill="none" stroke="#d0d0d0" stroke-width="0.8"/><circle cx="3.5" cy="4" r="0.6" fill="#d0d0d0"/><circle cx="6.5" cy="4" r="0.6" fill="#d0d0d0"/><path d="M3 6.2Q5 8 7 6.2" fill="none" stroke="#d0d0d0" stroke-width="0.7"/></svg>
<div class="tr" style="left:58.7px;top:513.1px">战士6号&nbsp;&nbsp;&nbsp; 魔鬼通道(第二版)</div>
</div>
<div class="a" style="left:171.6px;top:32px;width:2px;height:407px;background:#55585c;border-radius:1px"></div>
</div>
<div class="a" style="left:176px;top:60px;width:5px;height:542px;background:#282b30"></div><div class="a" id="tbl">
<div class="a" style="left:13.6px;top:8.7px;width:0;height:0;border-left:4.4px solid transparent;border-right:4.4px solid transparent;border-top:4.2px solid #12c6c6"></div>
<div class="h" style="left:37.0px;text-align:left">代码</div>
<div class="h" style="left:82.0px;text-align:left">名称</div>
<div class="h" style="right:785.5px">最新</div>
<div class="h" style="right:740.0px">现手</div>
<div class="h" style="right:695.0px">委买价</div>
<div class="h" style="right:650.0px">委买量</div>
<div class="h" style="right:604.7px">委卖价</div>
<div class="h" style="right:559.2px">委卖量</div>
<div class="h" style="right:510.0px">总手</div>
<div class="h" style="right:465.0px">涨幅</div>
<div class="h" style="right:419.5px">涨跌</div>
<div class="h" style="right:374.5px">振幅</div>
<div class="h" style="right:325.0px">持仓量</div>
<div class="h" style="right:279.0px">仓差</div>
<div class="h" style="right:234.0px">今开</div>
<div class="h" style="right:188.3px">最高</div>
<div class="h" style="right:143.0px">最低</div>
<div class="h" style="right:98.2px">前结</div>
<div class="h" style="right:53.6px">量比</div>
<div class="h" style="right:8.5px">前收</div>
<div class="a" style="left:0;top:20.3px;width:984px;height:1.1px;background:#0c9696"></div>
<div class="c W" style="left:-13.0px;top:25.1px;text-align:center;transform-origin:50% 50%">1</div>
<div class="c l" style="left:36.6px;top:25.1px;color:#c9c914">000837</div>
<div class="n" style="left:82.0px;top:25.4px">秦川机床</div>
<div class="c G" style="right:785.5px;top:25.1px">17.80</div>
<div class="c R" style="right:188.3px;top:25.1px">18.76</div>
<div class="c G" style="right:143.0px;top:25.1px">17.22</div>
<div class="c W" style="right:98.2px;top:25.1px">0.00</div>
<div class="c Y" style="right:53.6px;top:25.1px">0.00</div>
<div class="c W" style="right:8.5px;top:25.1px">17.99</div>
<div class="c W" style="left:-13.0px;top:44.7px;text-align:center;transform-origin:50% 50%">2</div>
<div class="c l" style="left:36.6px;top:44.7px;color:#c9c914">000928</div>
<div class="n" style="left:82.0px;top:45.0px">中钢国际</div>
<div class="c W" style="right:787.7px;top:42.5px;font-size:14px">—</div>
<div class="c G" style="right:190.5px;top:42.5px;font-size:14px">—</div>
<div class="c G" style="right:145.2px;top:42.5px;font-size:14px">—</div>
<div class="c W" style="right:100.4px;top:42.5px;font-size:14px">—</div>
<div class="c Y" style="right:55.8px;top:42.5px;font-size:14px">—</div>
<div class="c W" style="right:8.5px;top:44.7px">17.19</div>
<div class="c W" style="left:-13.0px;top:64.2px;text-align:center;transform-origin:50% 50%">3</div>
<div class="c l" style="left:36.6px;top:64.2px;color:#c9c914">000969</div>
<div class="n" style="left:82.0px;top:64.5px">安泰科技</div>
<div class="c R" style="right:785.5px;top:64.2px">14.63</div>
<div class="c R" style="right:188.3px;top:64.2px">14.99</div>
<div class="c G" style="right:143.0px;top:64.2px">14.33</div>
<div class="c W" style="right:98.2px;top:64.2px">0.00</div>
<div class="c Y" style="right:53.6px;top:64.2px">0.00</div>
<div class="c W" style="right:8.5px;top:64.2px">14.60</div>
<div class="c W" style="left:-13.0px;top:83.8px;text-align:center;transform-origin:50% 50%">4</div>
<div class="c l" style="left:36.6px;top:83.8px;color:#c9c914">000988</div>
<div class="n" style="left:82.0px;top:84.1px">华工科技</div>
<div class="c G" style="right:785.5px;top:83.8px">18.22</div>
<div class="c G" style="right:188.3px;top:83.8px">18.81</div>
<div class="c G" style="right:143.0px;top:83.8px">18.05</div>
<div class="c W" style="right:98.2px;top:83.8px">0.00</div>
<div class="c Y" style="right:53.6px;top:83.8px">0.00</div>
<div class="c W" style="right:8.5px;top:83.8px">19.02</div>
<div class="c W" style="left:-13.0px;top:103.4px;text-align:center;transform-origin:50% 50%">5</div>
<div class="c l" style="left:36.6px;top:103.4px;color:#c9c914">002008</div>
<div class="n" style="left:82.0px;top:103.7px">大族激光</div>
<div class="c G" style="right:785.5px;top:103.4px">26.63</div>
<div class="c G" style="right:188.3px;top:103.4px">27.46</div>
<div class="c G" style="right:143.0px;top:103.4px">26.59</div>
<div class="c W" style="right:98.2px;top:103.4px">0.00</div>
<div class="c Y" style="right:53.6px;top:103.4px">0.00</div>
<div class="c W" style="right:8.5px;top:103.4px">27.73</div>
<div class="red" style="left:157.6px;top:118.1px;width:45.4px;height:19.8px"></div>
<div class="red" style="left:752.0px;top:118.1px;width:92.1px;height:19.8px"></div>
<div class="c W" style="left:-13.0px;top:122.9px;text-align:center;transform-origin:50% 50%">6</div>
<div class="c l" style="left:36.6px;top:122.9px;color:#c9c914">002171</div>
<div class="n" style="left:82.0px;top:123.2px">精诚铜业</div>
<div class="c W" style="right:785.5px;top:122.9px">21.05</div>
<div class="c W" style="right:188.3px;top:122.9px">21.05</div>
<div class="c W" style="right:143.0px;top:122.9px">21.05</div>
<div class="c W" style="right:98.2px;top:122.9px">0.00</div>
<div class="c Y" style="right:53.6px;top:122.9px">0.00</div>
<div class="c W" style="right:8.5px;top:122.9px">19.14</div>
<div class="c W" style="left:-13.0px;top:142.5px;text-align:center;transform-origin:50% 50%">7</div>
<div class="c l" style="left:36.6px;top:142.5px;color:#c9c914">002182</div>
<div class="n" style="left:82.0px;top:142.8px">云海金属</div>
<div class="c G" style="right:785.5px;top:142.5px">18.37</div>
<div class="c R" style="right:188.3px;top:142.5px">18.93</div>
<div class="c G" style="right:143.0px;top:142.5px">18.15</div>
<div class="c W" style="right:98.2px;top:142.5px">0.00</div>
<div class="c Y" style="right:53.6px;top:142.5px">0.00</div>
<div class="c W" style="right:8.5px;top:142.5px">18.74</div>
<div class="c W" style="left:-13.0px;top:162.1px;text-align:center;transform-origin:50% 50%">8</div>
<div class="c l" style="left:36.6px;top:162.1px;color:#c9c914">002302</div>
<div class="n" style="left:82.0px;top:162.4px">西部建设</div>
<div class="c W" style="right:787.7px;top:159.9px;font-size:14px">—</div>
<div class="c G" style="right:190.5px;top:159.9px;font-size:14px">—</div>
<div class="c G" style="right:145.2px;top:159.9px;font-size:14px">—</div>
<div class="c W" style="right:100.4px;top:159.9px;font-size:14px">—</div>
<div class="c Y" style="right:55.8px;top:159.9px;font-size:14px">—</div>
<div class="c W" style="right:8.5px;top:162.1px">27.91</div>
<div class="c W" style="left:-13.0px;top:181.7px;text-align:center;transform-origin:50% 50%">9</div>
<div class="c l" style="left:36.6px;top:181.7px;color:#c9c914">002339</div>
<div class="n" style="left:82.0px;top:182.0px">积成电子</div>
<div class="c G" style="right:785.5px;top:181.7px">35.75</div>
<div class="c G" style="right:188.3px;top:181.7px">36.38</div>
<div class="c G" style="right:143.0px;top:181.7px">34.50</div>
<div class="c W" style="right:98.2px;top:181.7px">0.00</div>
<div class="c Y" style="right:53.6px;top:181.7px">0.00</div>
<div class="c W" style="right:8.5px;top:181.7px">36.46</div>
<div class="c W" style="left:-13.0px;top:201.2px;text-align:center;transform-origin:50% 50%">10</div>
<div class="c l" style="left:36.6px;top:201.2px;color:#c9c914">002347</div>
<div class="n" style="left:82.0px;top:201.5px">泰尔重工</div>
<div class="c R" style="right:785.5px;top:201.2px">20.20</div>
<div class="c R" style="right:188.3px;top:201.2px">20.75</div>
<div class="c R" style="right:143.0px;top:201.2px">19.11</div>
<div class="c W" style="right:98.2px;top:201.2px">0.00</div>
<div class="c Y" style="right:53.6px;top:201.2px">0.00</div>
<div class="c W" style="right:8.5px;top:201.2px">19.10</div>
<div class="c W" style="left:-13.0px;top:220.8px;text-align:center;transform-origin:50% 50%">11</div>
<div class="c l" style="left:36.6px;top:220.8px;color:#c9c914">002348</div>
<div class="n" style="left:82.0px;top:221.1px">高乐股份</div>
<div class="c R" style="right:785.5px;top:220.8px">16.68</div>
<div class="c R" style="right:188.3px;top:220.8px">17.20</div>
<div class="c G" style="right:143.0px;top:220.8px">16.02</div>
<div class="c W" style="right:98.2px;top:220.8px">0.00</div>
<div class="c Y" style="right:53.6px;top:220.8px">0.00</div>
<div class="c W" style="right:8.5px;top:220.8px">16.20</div>
<div class="c W" style="left:-13.0px;top:240.4px;text-align:center;transform-origin:50% 50%">12</div>
<div class="c l" style="left:36.6px;top:240.4px;color:#c9c914">002375</div>
<div class="n" style="left:82.0px;top:240.7px">亚厦股份</div>
<div class="c G" style="right:785.5px;top:240.4px">33.90</div>
<div class="c R" style="right:188.3px;top:240.4px">34.69</div>
<div class="c G" style="right:143.0px;top:240.4px">33.19</div>
<div class="c W" style="right:98.2px;top:240.4px">0.00</div>
<div class="c Y" style="right:53.6px;top:240.4px">0.00</div>
<div class="c W" style="right:8.5px;top:240.4px">34.62</div>
<div class="c W" style="left:-13.0px;top:259.9px;text-align:center;transform-origin:50% 50%">13</div>
<div class="c l" style="left:36.6px;top:259.9px;color:#c9c914">002376</div>
<div class="n" style="left:82.0px;top:260.2px">新北洋</div>
<div class="c G" style="right:785.5px;top:259.9px">19.84</div>
<div class="c G" style="right:188.3px;top:259.9px">20.66</div>
<div class="c G" style="right:143.0px;top:259.9px">19.30</div>
<div class="c W" style="right:98.2px;top:259.9px">0.00</div>
<div class="c Y" style="right:53.6px;top:259.9px">0.00</div>
<div class="c W" style="right:8.5px;top:259.9px">20.79</div>
<div class="c W" style="left:-13.0px;top:279.5px;text-align:center;transform-origin:50% 50%">14</div>
<div class="c l" style="left:36.6px;top:279.5px;color:#c9c914">002420</div>
<div class="n" style="left:82.0px;top:279.8px">毅昌股份</div>
<div class="c G" style="right:785.5px;top:279.5px">9.82</div>
<div class="c R" style="right:188.3px;top:279.5px">10.15</div>
<div class="c G" style="right:143.0px;top:279.5px">9.70</div>
<div class="c W" style="right:98.2px;top:279.5px">0.00</div>
<div class="c Y" style="right:53.6px;top:279.5px">0.00</div>
<div class="c W" style="right:8.5px;top:279.5px">10.10</div>
<div class="c W" style="left:-13.0px;top:299.1px;text-align:center;transform-origin:50% 50%">15</div>
<div class="c l" style="left:36.6px;top:299.1px;color:#c9c914">002526</div>
<div class="n" style="left:82.0px;top:299.4px">山东矿机</div>
<div class="c G" style="right:785.5px;top:299.1px">13.92</div>
<div class="c G" style="right:188.3px;top:299.1px">14.18</div>
<div class="c G" style="right:143.0px;top:299.1px">13.58</div>
<div class="c W" style="right:98.2px;top:299.1px">0.00</div>
<div class="c Y" style="right:53.6px;top:299.1px">0.00</div>
<div class="c W" style="right:8.5px;top:299.1px">14.20</div>
<div class="c W" style="left:-13.0px;top:318.7px;text-align:center;transform-origin:50% 50%">16</div>
<div class="c l" style="left:36.6px;top:318.7px;color:#c9c914">002529</div>
<div class="n" style="left:82.0px;top:319.0px">海源机械</div>
<div class="c R" style="right:785.5px;top:318.7px">22.30</div>
<div class="c R" style="right:188.3px;top:318.7px">22.57</div>
<div class="c G" style="right:143.0px;top:318.7px">21.50</div>
<div class="c W" style="right:98.2px;top:318.7px">0.00</div>
<div class="c Y" style="right:53.6px;top:318.7px">0.00</div>
<div class="c W" style="right:8.5px;top:318.7px">22.27</div>
<div class="c W" style="left:-13.0px;top:338.2px;text-align:center;transform-origin:50% 50%">17</div>
<div class="c l" style="left:36.6px;top:338.2px;color:#c9c914">002540</div>
<div class="n" style="left:82.0px;top:338.5px">亚太科技</div>
<div class="c R" style="right:785.5px;top:338.2px">16.04</div>
<div class="c R" style="right:188.3px;top:338.2px">16.86</div>
<div class="c R" style="right:143.0px;top:338.2px">15.71</div>
<div class="c W" style="right:98.2px;top:338.2px">0.00</div>
<div class="c Y" style="right:53.6px;top:338.2px">0.00</div>
<div class="c W" style="right:8.5px;top:338.2px">15.56</div>
<div class="c W" style="left:-13.0px;top:357.8px;text-align:center;transform-origin:50% 50%">18</div>
<div class="c l" style="left:36.6px;top:357.8px;color:#c9c914">002545</div>
<div class="n" style="left:82.0px;top:358.1px">东方铁塔</div>
<div class="c R" style="right:785.5px;top:357.8px">24.40</div>
<div class="c R" style="right:188.3px;top:357.8px">24.83</div>
<div class="c G" style="right:143.0px;top:357.8px">23.16</div>
<div class="c W" style="right:98.2px;top:357.8px">0.00</div>
<div class="c Y" style="right:53.6px;top:357.8px">0.00</div>
<div class="c W" style="right:8.5px;top:357.8px">23.94</div>
<div class="c W" style="left:-13.0px;top:377.4px;text-align:center;transform-origin:50% 50%">19</div>
<div class="c l" style="left:36.6px;top:377.4px;color:#c9c914">002559</div>
<div class="n" style="left:82.0px;top:377.7px">亚威股份</div>
<div class="c G" style="right:785.5px;top:377.4px">18.82</div>
<div class="c G" style="right:188.3px;top:377.4px">19.30</div>
<div class="c G" style="right:143.0px;top:377.4px">18.38</div>
<div class="c W" style="right:98.2px;top:377.4px">0.00</div>
<div class="c Y" style="right:53.6px;top:377.4px">0.00</div>
<div class="c W" style="right:8.5px;top:377.4px">19.51</div>
<div class="c W" style="left:-13.0px;top:396.9px;text-align:center;transform-origin:50% 50%">20</div>
<div class="c l" style="left:36.6px;top:396.9px;color:#c9c914">002691</div>
<div class="n" style="left:82.0px;top:397.2px">石中装备</div>
<div class="c G" style="right:785.5px;top:396.9px">19.42</div>
<div class="c G" style="right:188.3px;top:396.9px">20.15</div>
<div class="c G" style="right:143.0px;top:396.9px">19.22</div>
<div class="c W" style="right:98.2px;top:396.9px">0.00</div>
<div class="c Y" style="right:53.6px;top:396.9px">0.00</div>
<div class="c W" style="right:8.5px;top:396.9px">20.33</div>
<div class="red" style="left:157.6px;top:411.7px;width:45.4px;height:19.8px"></div>
<div class="red" style="left:752.0px;top:411.7px;width:92.1px;height:19.8px"></div>
<div class="c W" style="left:-13.0px;top:416.5px;text-align:center;transform-origin:50% 50%">21</div>
<div class="c l" style="left:36.6px;top:416.5px;color:#c9c914">002698</div>
<div class="n" style="left:82.0px;top:416.8px">博实股份</div>
<div class="c W" style="right:785.5px;top:416.5px">50.19</div>
<div class="c W" style="right:188.3px;top:416.5px">50.19</div>
<div class="c W" style="right:143.0px;top:416.5px">50.19</div>
<div class="c W" style="right:98.2px;top:416.5px">0.00</div>
<div class="c Y" style="right:53.6px;top:416.5px">0.00</div>
<div class="c W" style="right:8.5px;top:416.5px">45.63</div>
<div class="c W" style="left:-13.0px;top:436.1px;text-align:center;transform-origin:50% 50%">22</div>
<div class="c l" style="left:36.6px;top:436.1px;color:#c9c914">002721</div>
<div class="n" style="left:82.0px;top:436.4px">金一文化</div>
<div class="c G" style="right:785.5px;top:436.1px">54.51</div>
<div class="c G" style="right:188.3px;top:436.1px">57.50</div>
<div class="c G" style="right:143.0px;top:436.1px">52.36</div>
<div class="c W" style="right:98.2px;top:436.1px">0.00</div>
<div class="c Y" style="right:53.6px;top:436.1px">0.00</div>
<div class="c W" style="right:8.5px;top:436.1px">58.00</div>
<div class="c W" style="left:-13.0px;top:455.6px;text-align:center;transform-origin:50% 50%">23</div>
<div class="c l" style="left:36.6px;top:455.6px;color:#c9c914">002730</div>
<div class="n" style="left:82.0px;top:455.9px">电光科技</div>
<div class="c G" style="right:785.5px;top:455.6px">33.80</div>
<div class="c R" style="right:188.3px;top:455.6px">36.12</div>
<div class="c G" style="right:143.0px;top:455.6px">33.64</div>
<div class="c W" style="right:98.2px;top:455.6px">0.00</div>
<div class="c Y" style="right:53.6px;top:455.6px">0.00</div>
<div class="c W" style="right:8.5px;top:455.6px">35.42</div>
<div class="c W" style="left:-13.0px;top:475.2px;text-align:center;transform-origin:50% 50%">24</div>
<div class="c l" style="left:36.6px;top:475.2px;color:#c9c914">300004</div>
<div class="n" style="left:82.0px;top:475.5px">南风股份</div>
<div class="c R" style="right:785.5px;top:475.2px">89.30</div>
<div class="c Y" style="right:740.0px;top:475.2px">43391</div>
<div class="c R" style="right:695.0px;top:475.2px">89.30</div>
<div class="c Y" style="right:650.0px;top:475.2px">549</div>
<div class="c R" style="right:604.7px;top:475.2px">89.36</div>
<div class="c Y" style="right:559.2px;top:475.2px">35</div>
<div class="c Y" style="right:510.0px;top:475.2px">43391</div>
<div class="c R" style="right:465.0px;top:475.2px">1.60%</div>
<div class="c R" style="right:419.5px;top:475.2px">1.41</div>
<div class="c Y" style="right:374.5px;top:475.2px">14.70%</div>
<div class="c Y" style="right:325.0px;top:475.2px">0</div>
<div class="c Y" style="right:279.0px;top:475.2px">0</div>
<div class="c R" style="right:234.0px;top:475.2px">88.27</div>
<div class="c R" style="right:188.3px;top:475.2px">94.00</div>
<div class="c G" style="right:143.0px;top:475.2px">81.08</div>
<div class="c W" style="right:98.2px;top:475.2px">0.00</div>
<div class="c Y" style="right:53.6px;top:475.2px">0.00</div>
<div class="c W" style="right:8.5px;top:475.2px">87.89</div>
<div class="c W" style="left:-13.0px;top:494.8px;text-align:center;transform-origin:50% 50%">25</div>
<div class="c l" style="left:36.6px;top:494.8px;color:#c9c914">300024</div>
<div class="n" style="left:82.0px;top:495.1px">机器人</div>
<div class="c G" style="right:785.5px;top:494.8px">68.42</div>
<div class="c Y" style="right:740.0px;top:494.8px">231746</div>
<div class="c G" style="right:695.0px;top:494.8px">68.42</div>
<div class="c Y" style="right:650.0px;top:494.8px">107</div>
<div class="c G" style="right:604.7px;top:494.8px">68.43</div>
<div class="c Y" style="right:559.2px;top:494.8px">14</div>
<div class="c Y" style="right:510.0px;top:494.8px">231746</div>
<div class="c G" style="right:465.0px;top:494.8px">-3.16%</div>
<div class="c G" style="right:419.5px;top:494.8px">-2.23</div>
<div class="c Y" style="right:374.5px;top:494.8px">4.78%</div>
<div class="c Y" style="right:325.0px;top:494.8px">0</div>
<div class="c Y" style="right:279.0px;top:494.8px">0</div>
<div class="c G" style="right:234.0px;top:494.8px">69.80</div>
<div class="c R" style="right:188.3px;top:494.8px">70.70</div>
<div class="c G" style="right:143.0px;top:494.8px">67.32</div>
<div class="c W" style="right:98.2px;top:494.8px">0.00</div>
<div class="c Y" style="right:53.6px;top:494.8px">0.00</div>
<div class="c W" style="right:8.5px;top:494.8px">70.65</div>
<div class="c W" style="left:-13.0px;top:514.3px;text-align:center;transform-origin:50% 50%">26</div>
<div class="c l" style="left:36.6px;top:514.3px;color:#c9c914">300161</div>
<div class="n" style="left:82.0px;top:514.6px">华中数控</div>
<div class="c G" style="right:785.5px;top:514.3px">31.69</div>
<div class="c Y" style="right:740.0px;top:514.3px">104432</div>
<div class="c G" style="right:695.0px;top:514.3px">31.68</div>
<div class="c Y" style="right:650.0px;top:514.3px">7</div>
<div class="c G" style="right:604.7px;top:514.3px">31.69</div>
<div class="c Y" style="right:559.2px;top:514.3px">638</div>
<div class="c Y" style="right:510.0px;top:514.3px">104432</div>
<div class="c G" style="right:465.0px;top:514.3px">-3.68%</div>
<div class="c G" style="right:419.5px;top:514.3px">-1.21</div>
<div class="c Y" style="right:374.5px;top:514.3px">4.59%</div>
<div class="c Y" style="right:325.0px;top:514.3px">0</div>
<div class="c Y" style="right:279.0px;top:514.3px">0</div>
<div class="c G" style="right:234.0px;top:514.3px">32.38</div>
<div class="c G" style="right:188.3px;top:514.3px">32.50</div>
<div class="c G" style="right:143.0px;top:514.3px">30.99</div>
<div class="c W" style="right:98.2px;top:514.3px">0.00</div>
<div class="c Y" style="right:53.6px;top:514.3px">0.00</div>
<div class="c W" style="right:8.5px;top:514.3px">32.90</div>
</div>
<div class="a" style="left:1165px;top:60px;width:13px;height:542px;background:#000"></div>
<div class="a" style="left:1165px;top:61px;width:10.5px;height:11.5px;border:1px solid #1e1e1e"></div>
<div class="a" style="left:1167.2px;top:64.5px;width:0;height:0;border-left:3px solid transparent;border-right:3px solid transparent;border-bottom:5px solid #333"></div>
<div class="a" style="left:1165px;top:73px;width:10.5px;height:342px;background:#262626;border-radius:0 0 2px 2px"></div>
<div class="a" style="left:1168px;top:241px;width:5px;height:1px;background:#8a8a8a;box-shadow:0 2px 0 #8a8a8a,0 4px 0 #8a8a8a"></div><div class="a" id="rt">
<div class="a" style="left:0.5px;top:0;width:21.5px;height:330.6px;background:#1d1f23;border-radius:0 0 0 3px"></div>
<div class="a" style="left:5px;top:3px;width:12px;height:0;border-top:1px dotted #888"></div>
<svg class="ic" style="left:5px;top:8px" width="12" height="11" viewBox="0 0 12 11"><path d="M1 7L4.5 5L7 6L11 1.5M0.5 10H11.5" stroke="#d0d0d0" stroke-width="0.9" fill="none"/></svg>
<svg class="ic" style="left:5px;top:41px" width="12" height="11" viewBox="0 0 12 11"><rect x="0.8" y="0.8" width="10.4" height="9.4" rx="1" fill="none" stroke="#d0d0d0" stroke-width="0.9"/><path d="M2.5 7L5 4.5L7 6L9.5 3" stroke="#d0d0d0" stroke-width="0.9" fill="none"/></svg>
<div class="rti" style="top:25.6px">Bn</div>
<div class="rti" style="top:58.2px">Sn</div>
<div class="rti" style="top:75.8px">1</div>
<div class="rti" style="top:90.7px">Mn</div>
<div class="rti" style="top:108.6px">3</div>
<div class="rti" style="top:125.2px">5</div>
<div class="rti" style="top:141.2px">10</div>
<div class="rti" style="top:157.9px">15</div>
<div class="rti" style="top:174.5px">30</div>
<div class="rti" style="top:190.7px">时</div>
<div class="rti" style="top:207.2px">Hn</div>
<div class="rti" style="top:223.9px">日</div>
<div class="rti" style="top:240.0px">Rn</div>
<div class="rti" style="top:256.6px">周</div>
<div class="rti" style="top:273.2px">月</div>
<div class="a" style="left:2px;top:287.9px;width:19.5px;height:16px;background:#414347;border:1px solid #56595d;border-radius:3px"></div>
<div class="rti" style="top:289.9px">季</div>
<div class="rti" style="top:307.2px">年</div>
<div class="a" style="left:5.5px;top:322px;width:0;height:0;border-top:2px solid transparent;border-bottom:2px solid transparent;border-right:2.6px solid #d0d0d0"></div>
</div><div class="a" id="dlg">
<div class="a" style="left:0;top:0;width:548px;height:19.2px;background:#eff3fa"></div>
<div class="t" style="left:3.5px;top:3.6px;font-size:9.2px">选项</div>
<svg class="ic" style="left:532.0px;top:5.4px" width="8" height="8" viewBox="0 0 8 8"><path d="M0.5 0.5L7.5 7.5M7.5 0.5L0.5 7.5" stroke="#222" stroke-width="0.9" fill="none"/></svg>
<div class="a" style="left:2.0px;top:19.4px;width:121.0px;height:402.0px;background:#fff;border:1px solid #bdbdbd;border-right-color:#d8d8d8;border-bottom-color:#d8d8d8"></div>
<div class="a" style="left:111.0px;top:20.4px;width:11px;height:400px;background:#f3f3f3"></div>
<div class="a" style="left:116.0px;top:47.1px;width:1.6px;height:360px;background:#8c8c8c;border-radius:1px"></div>
<div class="dv" style="left:11.0px;top:20.6px;height:218.5px"></div>
<div class="dv" style="left:25.5px;top:20.6px;height:83.2px"></div>
<div class="dv" style="left:25.5px;top:125.8px;height:23.0px"></div>
<div class="dv" style="left:25.5px;top:170.8px;height:53.0px"></div>
<div class="dv" style="left:25.5px;top:245.8px;height:158.0px"></div>
<div class="dh" style="left:26.0px;top:28.8px;width:8px"></div>
<div class="a" style="left:48.0px;top:22.3px;width:21px;height:13px;background:#eeeeee"></div>
<svg class="ic" style="left:36.0px;top:24.8px" width="8" height="8" viewBox="0 0 8 8"><path d="M0.5 2.8H4V0.6L7.6 4L4 7.4V5.2H0.5Z" fill="#444" stroke="#222" stroke-width="0.5"/></svg>
<div class="ti" style="left:49.5px;top:24.5px">常规</div>
<div class="dh" style="left:26.0px;top:43.8px;width:8px"></div>
<div class="ti" style="left:49.5px;top:39.5px">内存</div>
<div class="dh" style="left:26.0px;top:58.8px;width:8px"></div>
<div class="ti" style="left:49.5px;top:54.5px">多周期</div>
<div class="dh" style="left:26.0px;top:73.8px;width:8px"></div>
<div class="ti" style="left:49.5px;top:69.5px">扩展统计</div>
<div class="dh" style="left:26.0px;top:88.8px;width:8px"></div>
<div class="ti" style="left:49.5px;top:84.5px">升级与时间</div>
<div class="dh" style="left:26.0px;top:103.8px;width:8px"></div>
<div class="ti" style="left:49.5px;top:99.5px">其他</div>
<div class="a" style="left:8.2px;top:115.8px;width:6.5px;height:6.5px;border:1px solid #9a9a9a;background:#fff"></div>
<div class="a" style="left:10.0px;top:118.6px;width:3px;height:1px;background:#3a5fb0"></div>
<div class="dh" style="left:15.0px;top:118.8px;width:5px"></div>
<svg class="ic" style="left:19.8px;top:113.9px" width="11.5" height="9.5" viewBox="0 0 11.5 9.5"><path d="M1.6 8.4V2L2.8 0.8H5L6 2H9.4V4" fill="#ecece0" stroke="#8a8a8a" stroke-width="0.6"/><path d="M0.6 8.6L2.2 3.8H10.8L9.4 8.6Z" fill="#f6f25c" stroke="#6a6a20" stroke-width="0.5"/><path d="M0.8 9L9.8 9L11.2 4.2" fill="none" stroke="#2a2a2a" stroke-width="0.8"/></svg>
<div class="ti" style="left:35.5px;top:114.5px">行情设置</div>
<div class="dh" style="left:26.0px;top:133.8px;width:8px"></div>
<div class="ti" style="left:49.5px;top:129.5px">自动收盘</div>
<div class="dh" style="left:26.0px;top:148.8px;width:8px"></div>
<div class="ti" style="left:49.5px;top:144.5px">数据与存储</div>
<div class="a" style="left:8.2px;top:160.8px;width:6.5px;height:6.5px;border:1px solid #9a9a9a;background:#fff"></div>
<div class="a" style="left:10.0px;top:163.6px;width:3px;height:1px;background:#3a5fb0"></div>
<div class="dh" style="left:15.0px;top:163.8px;width:5px"></div>
<svg class="ic" style="left:19.8px;top:158.9px" width="11.5" height="9.5" viewBox="0 0 11.5 9.5"><path d="M1.6 8.4V2L2.8 0.8H5L6 2H9.4V4" fill="#ecece0" stroke="#8a8a8a" stroke-width="0.6"/><path d="M0.6 8.6L2.2 3.8H10.8L9.4 8.6Z" fill="#f6f25c" stroke="#6a6a20" stroke-width="0.5"/><path d="M0.8 9L9.8 9L11.2 4.2" fill="none" stroke="#2a2a2a" stroke-width="0.8"/></svg>
<div class="ti" style="left:35.5px;top:159.5px">外观设置</div>
<div class="dh" style="left:26.0px;top:178.8px;width:8px"></div>
<div class="ti" style="left:49.5px;top:174.5px">K线与分时图</div>
<div class="dh" style="left:26.0px;top:193.8px;width:8px"></div>
<div class="ti" style="left:49.5px;top:189.5px">系统界面</div>
<div class="dh" style="left:26.0px;top:208.8px;width:8px"></div>
<div class="ti" style="left:49.5px;top:204.5px">配色方案</div>
<div class="dh" style="left:26.0px;top:223.8px;width:8px"></div>
<div class="ti" style="left:49.5px;top:219.5px">状态栏</div>
<div class="a" style="left:8.2px;top:235.8px;width:6.5px;height:6.5px;border:1px solid #9a9a9a;background:#fff"></div>
<div class="a" style="left:10.0px;top:238.6px;width:3px;height:1px;background:#3a5fb0"></div>
<div class="dh" style="left:15.0px;top:238.8px;width:5px"></div>
<svg class="ic" style="left:19.8px;top:233.9px" width="11.5" height="9.5" viewBox="0 0 11.5 9.5"><path d="M1.6 8.4V2L2.8 0.8H5L6 2H9.4V4" fill="#ecece0" stroke="#8a8a8a" stroke-width="0.6"/><path d="M0.6 8.6L2.2 3.8H10.8L9.4 8.6Z" fill="#f6f25c" stroke="#6a6a20" stroke-width="0.5"/><path d="M0.8 9L9.8 9L11.2 4.2" fill="none" stroke="#2a2a2a" stroke-width="0.8"/></svg>
<div class="ti" style="left:35.5px;top:234.5px">交易设置</div>
<div class="dh" style="left:26.0px;top:253.8px;width:8px"></div>
<div class="ti" style="left:49.5px;top:249.5px">常规</div>
<div class="dh" style="left:26.0px;top:268.8px;width:8px"></div>
<div class="ti" style="left:49.5px;top:264.5px">止损止盈</div>
<div class="dh" style="left:26.0px;top:283.8px;width:8px"></div>
<div class="ti" style="left:49.5px;top:279.5px">追单撤单</div>
<div class="dh" style="left:26.0px;top:298.8px;width:8px"></div>
<div class="ti" style="left:49.5px;top:294.5px">程式化交易</div>
<div class="dh" style="left:26.0px;top:313.8px;width:8px"></div>
<div class="ti" style="left:49.5px;top:309.5px">风控</div>
<div class="dh" style="left:26.0px;top:328.8px;width:8px"></div>
<div class="ti" style="left:49.5px;top:324.5px">帐户</div>
<div class="dh" style="left:26.0px;top:343.8px;width:8px"></div>
<div class="ti" style="left:49.5px;top:339.5px">大单拆单</div>
<div class="dh" style="left:26.0px;top:358.8px;width:8px"></div>
<div class="ti" style="left:49.5px;top:354.5px">算法拆单</div>
<div class="dh" style="left:26.0px;top:373.8px;width:8px"></div>
<div class="ti" style="left:49.5px;top:369.5px">期货手工下单</div>
<div class="dh" style="left:26.0px;top:388.8px;width:8px"></div>
<div class="ti" style="left:49.5px;top:384.5px">股票手工下单</div>
<div class="dh" style="left:26.0px;top:403.8px;width:8px"></div>
<div class="ti" style="left:49.5px;top:399.5px">闪电下单界面</div>
<div class="a" style="left:125.0px;top:19.1px;width:423.0px;height:402.0px;background:#f9f9f9;border-left:1px solid #dedede;border-bottom:1px solid #e4e4e4"></div>
<div class="gb" style="left:136.7px;top:36.1px;width:389.6px;height:37.7px"></div>
<div class="gl" style="left:142.5px;top:31.3px">行情数据时区使用</div>
<div class="rad on" style="left:164.2px;top:50.8px"></div>
<div class="a" style="left:176.0px;top:48.6px;width:122.0px;height:14.5px;border:1px dotted #555"></div>
<div class="t" style="left:177.0px;top:50.8px;">金字塔时区(矫正过时间)(推荐)</div>
<div class="rad" style="left:356.7px;top:50.8px"></div>
<div class="t" style="left:369.2px;top:50.8px;">北京/国内交易所时区</div>
<div class="gb" style="left:136.7px;top:82.3px;width:389.6px;height:82.0px"></div>
<div class="gl" style="left:142.5px;top:77.5px">默认初始从硬盘读取的K线计算数量</div>
<div class="t" style="left:164.7px;top:97.8px;">图形显示</div>
<div class="inp" style="left:212.1px;top:93.7px;width:33.1px;height:21.1px;">560</div>
<div class="t" style="left:249.0px;top:97.8px;">根K线 (0表示全部)</div>
<div class="chk " style="left:356.8px;top:99.1px"></div>
<div class="t" style="left:369.4px;top:99.1px;">仅启动接收后有效</div>
<div class="t" style="left:163.3px;top:123.6px;">内存保留</div>
<div class="inp" style="left:210.8px;top:117.9px;width:32.8px;height:20.8px;">560</div>
<div class="t" style="left:247.5px;top:122.1px;">根K线&nbsp; (用于后台预警、选股、指标排序等)</div>
<div class="chk on" style="left:164.5px;top:145.6px"></div>
<svg class="ic" style="left:164.5px;top:145.6px" width="10" height="10" viewBox="0 0 10 10"><path d="M2.4 5.2L4.2 7L7.6 3.2" stroke="#fff" stroke-width="1" fill="none"/></svg>
<div class="t" style="left:177.0px;top:145.8px;">键盘智能扩充以上设置大小数量</div>
<div class="gb" style="left:136.7px;top:172.1px;width:389.6px;height:80.8px"></div>
<div class="gl" style="left:142.5px;top:167.3px">刷新间隔</div>
<div class="t" style="left:164.7px;top:184.9px;">报表刷新时间(毫秒)</div>
<div class="inp" style="left:262.4px;top:180.4px;width:39.3px;height:20.7px;">500</div>
<div class="t" style="left:164.7px;top:208.8px;">涨速比较时间(秒)</div>
<div class="inp" style="left:262.4px;top:204.3px;width:39.3px;height:20.7px;">300</div>
<div class="t" style="left:164.7px;top:232.4px;">盘中延迟刷新(毫秒)</div>
<div class="inp" style="left:262.4px;top:227.6px;width:39.3px;height:20.9px;">800</div>
<div class="t" style="left:357.4px;top:184.5px;">指标排序更新(秒)</div>
<div class="inp" style="left:443.6px;top:180.3px;width:39.4px;height:20.8px;">300</div>
<div class="t" style="left:357.4px;top:208.5px;">自动换页时间(秒)</div>
<div class="inp" style="left:443.6px;top:204.5px;width:39.4px;height:20.6px;">10</div>
<div class="gb" style="left:136.7px;top:261.6px;width:389.6px;height:73.0px"></div>
<div class="gl" style="left:142.5px;top:256.8px">声音选项</div>
<div class="rad" style="left:164.2px;top:276.6px"></div>
<div class="t" style="left:177.0px;top:276.6px;">关闭所有声音</div>
<div class="rad" style="left:164.2px;top:293.8px"></div>
<div class="t" style="left:177.0px;top:293.8px;">开启所有声音提示</div>
<div class="rad" style="left:164.2px;top:312.8px"></div>
<div class="t" style="left:177.0px;top:312.8px;">仅播报重要声音提示</div>
<div class="rad on" style="left:356.6px;top:275.9px"></div>
<div class="t" style="left:369.4px;top:275.9px;">仅播报交易提示声音</div>
<div class="rad" style="left:356.6px;top:293.9px"></div>
<div class="t" style="left:369.4px;top:293.9px;">仅播报交易成交回报提示音</div>
<div class="gb" style="left:136.7px;top:344.1px;width:389.6px;height:41.8px"></div>
<div class="gl" style="left:142.5px;top:339.3px">老板键设置</div>
<div class="chk " style="left:164.5px;top:361.6px"></div>
<div class="t" style="left:177.0px;top:361.6px;">使用老板键</div>
<div class="chk dis" style="left:255.6px;top:361.6px"></div>
<div class="t" style="left:267.8px;top:361.6px;color:#8a8a8a;"><u>C</u>trl</div>
<div class="chk dis" style="left:297.8px;top:361.6px"></div>
<div class="t" style="left:310.0px;top:361.6px;color:#8a8a8a;">S<u>h</u>ift</div>
<div class="chk dison" style="left:345.2px;top:361.6px"></div>
<svg class="ic" style="left:345.2px;top:361.6px" width="10" height="10" viewBox="0 0 10 10"><path d="M2.4 5.2L4.2 7L7.6 3.2" stroke="#fff" stroke-width="1" fill="none"/></svg>
<div class="t" style="left:357.0px;top:361.6px;color:#8a8a8a;">A<u>l</u>t +</div>
<div class="inp" style="left:392.2px;top:357.5px;width:31.8px;height:21.6px;background:#f9f9f9;border:1px solid #e6e6e6;color:#777;padding-top:3.6px;padding-left:3px;">Q</div>
<div class="btn" style="left:336.0px;width:65px;border:1px solid #0a62b8">确定</div>
<div class="btn" style="left:407.4px;width:64px">取消</div>
<div class="btn" style="left:478.4px;width:64.2px">需要帮助?</div>
</div>
</body></html>
